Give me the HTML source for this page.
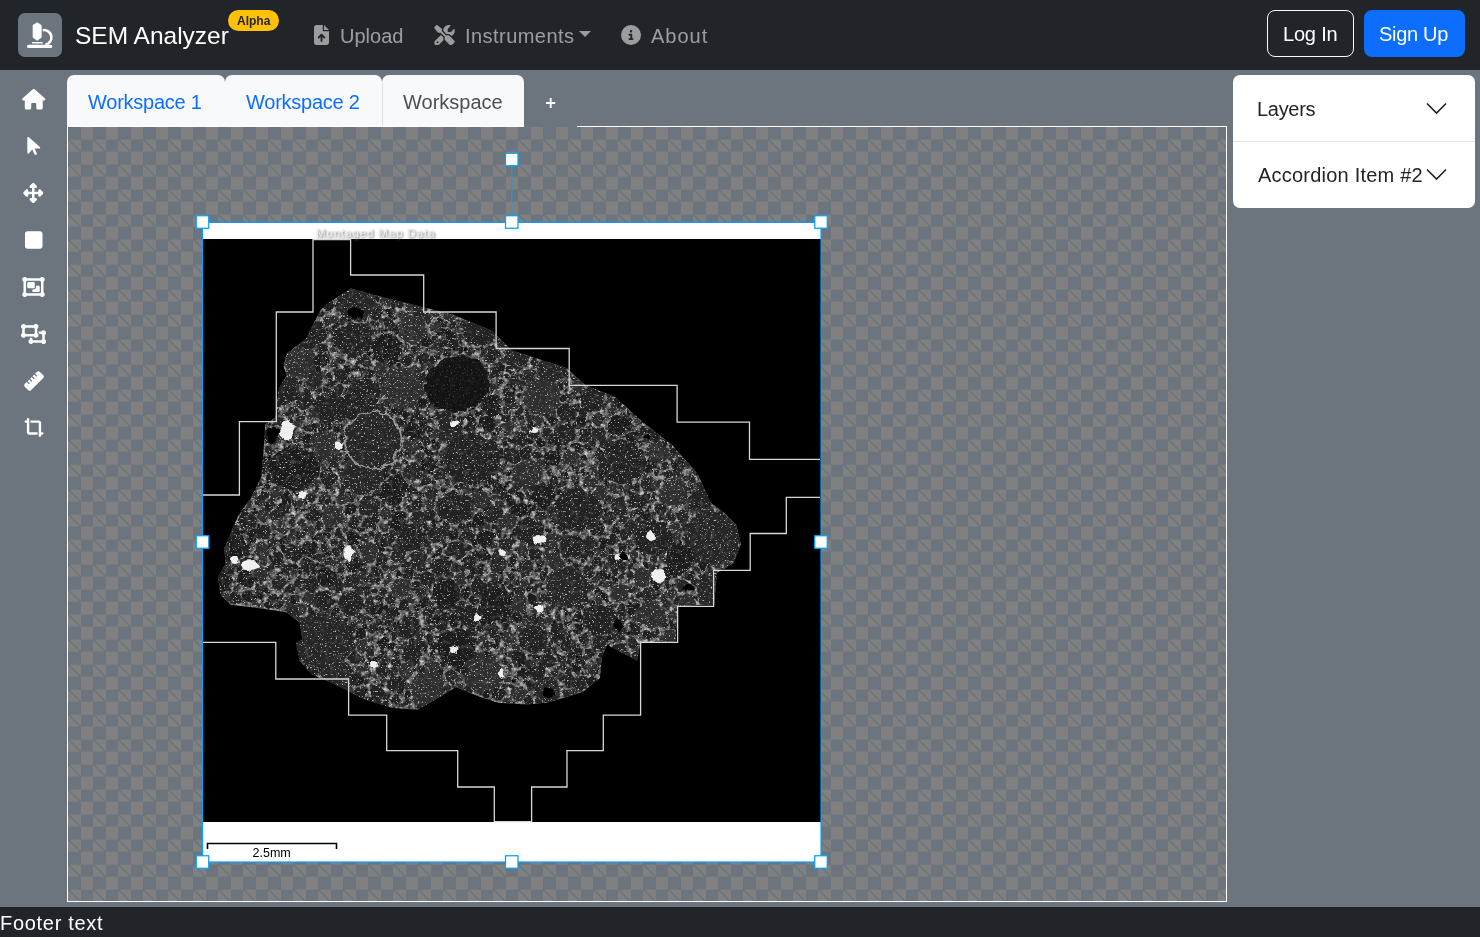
<!DOCTYPE html>
<html><head><meta charset="utf-8">
<style>
html,body{margin:0;padding:0;width:1480px;height:937px;overflow:hidden;background:#6c757d;font-family:"Liberation Sans",sans-serif;}
.abs{position:absolute;}
#nav{position:absolute;left:0;top:0;width:1480px;height:70px;background:#212529;}
#footer{position:absolute;left:0;top:907px;width:1480px;height:30px;background:#212529;color:#fff;font-size:20px;}
.t{position:absolute;white-space:nowrap;line-height:1;will-change:transform;}
.navlink{color:rgba(255,255,255,.55);font-size:20px;}
.tab{position:absolute;top:75px;height:51px;background:#f8f9fa;border-radius:7px 7px 0 0;}
.side svg{position:absolute;fill:#fff;}
</style></head><body>
<div id="nav">
  <div class="abs" style="left:18px;top:13px;width:44px;height:44px;background:#6c757d;border-radius:7px;"></div>
  
  <svg class="abs" style="left:0;top:0" width="70" height="70" viewBox="0 0 70 70" fill="#fff">
    <path d="M37.15 22.8 L41.2 25.2 V37.5 L37.15 40.3 L33.1 37.5 V25.2 Z" stroke="#fff" stroke-width="0.8" stroke-linejoin="round"/>
    <rect x="31.9" y="41.9" width="10.9" height="1.5" rx="0.6"/>
    <path d="M42.8 30.2 A7.1 7.1 0 0 1 45.5 44.5" fill="none" stroke="#fff" stroke-width="2.6"/>
    <rect x="27" y="44.7" width="25.2" height="3.3" rx="1.6"/>
  </svg>
  <svg class="abs" style="left:314px;top:25px" width="15" height="20" viewBox="0 0 384 512" fill="rgba(255,255,255,.55)"><path d="M64 0C28.7 0 0 28.7 0 64V448c0 35.3 28.7 64 64 64H320c35.3 0 64-28.7 64-64V160H256c-17.7 0-32-14.3-32-32V0H64zM256 0V128H384L256 0zM216 408c0 13.3-10.7 24-24 24s-24-10.7-24-24V305.9l-31 31c-9.4 9.4-24.6 9.4-33.9 0s-9.4-24.6 0-33.9l72-72c9.4-9.4 24.6-9.4 33.9 0l72 72c9.4 9.4 9.4 24.6 0 33.9s-24.6 9.4-33.9 0l-31-31V408z"/></svg>
  <svg class="abs" style="left:433.5px;top:24.5px" width="21" height="20.5" viewBox="0 0 512 512" fill="rgba(255,255,255,.55)"><path d="M78.6 5C69.1-2.4 55.6-1.5 47 7L7 47c-8.5 8.5-9.4 22-2.1 31.6l80 104c4.5 5.9 11.6 9.4 19 9.4h54.1l109 109c-14.7 29-10 65.4 14.3 89.6l112 112c12.5 12.5 32.8 12.5 45.3 0l64-64c12.5-12.5 12.5-32.8 0-45.3l-112-112c-24.2-24.2-60.6-29-89.6-14.3l-109-109V104c0-7.5-3.5-14.5-9.4-19L78.6 5zM19.9 396.1C7.2 408.8 0 426.1 0 444.1C0 481.6 30.4 512 67.9 512c18 0 35.3-7.2 48-19.9L233.7 374.3c-7.8-20.9-9-43.6-3.6-65.1l-61.7-61.7L19.9 396.1zM512 144c0-10.5-1.1-20.7-3.2-30.5c-2.4-11.2-16.1-14.1-24.2-6l-63.9 63.9c-3 3-7.1 4.7-11.3 4.7H352c-8.8 0-16-7.2-16-16V102.6c0-4.2 1.7-8.3 4.7-11.3l63.9-63.9c8.1-8.1 5.2-21.8-6-24.2C388.7 1.1 378.5 0 368 0C288.5 0 224 64.5 224 144l0 .8 85.3 85.3c36-9.1 75.8 .5 104 28.7L429 274.5c49-23 83-72.8 83-130.5zM56 432a24 24 0 1 1 48 0 24 24 0 1 1 -48 0z"/></svg>
  <svg class="abs" style="left:579px;top:31px" width="12" height="6" viewBox="0 0 12 6" fill="rgba(255,255,255,.55)"><path d="M0 0H12L6 6Z"/></svg>
  <svg class="abs" style="left:621px;top:25px" width="20" height="20" viewBox="0 0 512 512" fill="rgba(255,255,255,.55)"><path d="M256 512A256 256 0 1 0 256 0a256 256 0 1 0 0 512zM216 336h24V272H216c-13.3 0-24-10.7-24-24s10.7-24 24-24h48c13.3 0 24 10.7 24 24v88h8c13.3 0 24 10.7 24 24s-10.7 24-24 24H216c-13.3 0-24-10.7-24-24s10.7-24 24-24zm40-208a32 32 0 1 1 0 64 32 32 0 1 1 0-64z"/></svg>
  <div class="t" style="left:75px;top:24.4px;font-size:24.5px;color:#fff;">SEM Analyzer</div>
  <div class="abs" style="left:228px;top:10px;width:51px;height:21px;background:#ffc107;border-radius:11px;"></div>
  <div class="t" style="left:237px;top:14.8px;font-size:12px;font-weight:bold;color:#212529;">Alpha</div>
  <div class="t navlink" style="left:340px;top:26px;">Upload</div>
  <div class="t navlink" style="left:464.5px;top:26px;letter-spacing:0.45px;">Instruments</div>
  <div class="t navlink" style="left:651px;top:26.2px;letter-spacing:1px;">About</div>
  <div class="abs" style="left:1267px;top:10px;width:85px;height:45px;border:1px solid #f8f9fa;border-radius:8px;"></div>
  <div class="t" style="left:1283.3px;top:24.3px;font-size:20px;color:#fff;letter-spacing:-0.2px;">Log In</div>
  <div class="abs" style="left:1364px;top:10px;width:101px;height:47px;background:#0d6efd;border-radius:8px;"></div>
  <div class="t" style="left:1379.3px;top:24.3px;font-size:20px;color:#fff;letter-spacing:-0.3px;">Sign Up</div>
</div>

<svg class="abs" style="left:0;top:0" width="1480" height="937" viewBox="0 0 1480 937">
<defs>
<pattern id="chk" patternUnits="userSpaceOnUse" x="68" y="126.6" width="25" height="25">
<rect width="25" height="25" fill="#6c757d"/>
<rect x="12.5" y="0" width="12.5" height="12.5" fill="#808080" shape-rendering="crispEdges"/>
<rect x="0" y="12.5" width="12.5" height="12.5" fill="#808080" shape-rendering="crispEdges"/>
<line x1="0" y1="12.5" x2="12.5" y2="25" stroke="#66707a" stroke-width="1.1"/>
</pattern>
<clipPath id="rockclip"><polygon points="350.9,288.6 382.9,297.2 421.3,306.8 453.3,314.8 491.8,330.8 512.0,350.4 566.5,368.0 585.7,385.6 614.5,396.8 643.3,422.5 672.1,444.9 697.7,473.7 710.5,502.5 723.4,512.1 736.2,525.0 741.0,544.0 733.0,563.4 717.0,573.0 714.2,604.3 677.3,606.0 675.6,641.2 640.4,643.0 637.0,660.5 607.0,644.7 601.8,657.0 600.0,678.1 582.4,692.2 547.3,702.7 526.2,704.5 498.1,702.7 477.0,695.7 456.0,686.9 441.9,695.7 417.3,709.7 392.7,708.0 364.6,699.2 350.5,692.2 336.5,685.1 311.9,674.6 299.6,660.5 296.0,643.0 302.4,640.0 299.8,622.7 287.0,612.5 264.0,608.7 230.7,604.8 220.5,594.6 218.0,576.7 225.6,563.8 224.3,548.5 230.7,533.0 238.4,515.2 251.2,497.3 261.4,476.8 264.0,443.5 265.3,424.3 275.6,417.3 278.8,388.5 286.8,375.7 283.6,366.0 286.8,353.3 306.0,338.8 312.5,326.0 320.5,310.0 325.3,305.2"/></clipPath>
<filter id="rough" filterUnits="userSpaceOnUse" x="200" y="280" width="560" height="440">
<feTurbulence type="fractalNoise" baseFrequency="0.12" numOctaves="2" seed="2" result="n"/>
<feDisplacementMap in="SourceGraphic" in2="n" scale="8" xChannelSelector="R" yChannelSelector="G"/>
</filter>
<filter id="speck" filterUnits="userSpaceOnUse" x="200" y="280" width="560" height="440" color-interpolation-filters="sRGB">
<feTurbulence type="fractalNoise" baseFrequency="0.55" numOctaves="2" seed="5" result="sp"/>
<feColorMatrix in="sp" type="matrix" values="0 0 0 0 0.75  0 0 0 0 0.75  0 0 0 0 0.75  6 0 0 0 -3.75"/>
</filter>
<filter id="mottle" filterUnits="userSpaceOnUse" x="200" y="280" width="560" height="440" color-interpolation-filters="sRGB">
<feTurbulence type="fractalNoise" baseFrequency="0.2" numOctaves="2" seed="13" result="mo"/>
<feColorMatrix in="mo" type="matrix" values="0 0 0 0 0.28  0 0 0 0 0.28  0 0 0 0 0.28  3 0 0 0 -1.6"/>
</filter>
<filter id="matrix" filterUnits="userSpaceOnUse" x="200" y="280" width="560" height="440" color-interpolation-filters="sRGB">
<feTurbulence type="fractalNoise" baseFrequency="0.25" numOctaves="2" seed="8" result="m"/>
<feColorMatrix in="m" type="matrix" values="1.3 0 0 0 -0.25  1.3 0 0 0 -0.25  1.3 0 0 0 -0.25  0 0 0 0 1"/>
</filter>
</defs>
<rect x="67" y="126" width="1160" height="776" fill="#fff"/>
<rect x="68" y="127" width="1158" height="774" fill="url(#chk)"/>
<rect x="524" y="125.5" width="53" height="1.5" fill="#6c757d"/>
<rect x="203" y="223" width="618" height="639" fill="#fff"/>
<rect x="203" y="239" width="618" height="583" fill="#000"/>
<g clip-path="url(#rockclip)">
<rect x="200" y="280" width="560" height="440" filter="url(#matrix)"/>
<g filter="url(#rough)"><ellipse cx="457.0" cy="384.0" rx="33.0" ry="28.0" transform="rotate(-20 457.0 384.0)" fill="#1c1c1c"/><ellipse cx="373.0" cy="440.0" rx="29.0" ry="29.0" transform="rotate(0 373.0 440.0)" fill="#282828"/><ellipse cx="711.0" cy="538.0" rx="27.0" ry="28.0" transform="rotate(0 711.0 538.0)" fill="#282828"/><ellipse cx="572.0" cy="546.0" rx="12.0" ry="12.0" transform="rotate(0 572.0 546.0)" fill="#242424"/><ellipse cx="567.0" cy="587.0" rx="22.0" ry="20.0" transform="rotate(0 567.0 587.0)" fill="#282828"/><ellipse cx="601.0" cy="620.0" rx="18.0" ry="16.0" transform="rotate(0 601.0 620.0)" fill="#202020"/><ellipse cx="472.0" cy="459.0" rx="28.0" ry="26.0" transform="rotate(0 472.0 459.0)" fill="#202020"/><ellipse cx="410.0" cy="538.0" rx="14.0" ry="14.0" transform="rotate(0 410.0 538.0)" fill="#242424"/><ellipse cx="362.0" cy="476.0" rx="20.0" ry="18.0" transform="rotate(0 362.0 476.0)" fill="#282828"/><ellipse cx="294.0" cy="469.0" rx="26.0" ry="22.0" transform="rotate(0 294.0 469.0)" fill="#1c1c1c"/><ellipse cx="322.0" cy="640.0" rx="30.0" ry="28.0" transform="rotate(0 322.0 640.0)" fill="#282828"/><ellipse cx="578.0" cy="510.0" rx="24.0" ry="22.0" transform="rotate(0 578.0 510.0)" fill="#242424"/><ellipse cx="622.0" cy="462.0" rx="24.0" ry="22.0" transform="rotate(0 622.0 462.0)" fill="#202020"/><ellipse cx="653.0" cy="538.0" rx="20.0" ry="18.0" transform="rotate(0 653.0 538.0)" fill="#242424"/><ellipse cx="301.0" cy="363.0" rx="16.0" ry="16.0" transform="rotate(0 301.0 363.0)" fill="#2e2e2e"/><ellipse cx="354.0" cy="340.0" rx="20.0" ry="17.0" transform="rotate(0 354.0 340.0)" fill="#242424"/><ellipse cx="402.0" cy="388.0" rx="22.0" ry="20.0" transform="rotate(0 402.0 388.0)" fill="#2e2e2e"/><ellipse cx="386.6" cy="349.4" rx="14.6" ry="16.2" transform="rotate(17 386.6 349.4)" fill="#1c1c1c"/><ellipse cx="523.9" cy="673.4" rx="5.4" ry="5.6" transform="rotate(13 523.9 673.4)" fill="#1c1c1c"/><ellipse cx="547.5" cy="689.7" rx="14.2" ry="12.0" transform="rotate(40 547.5 689.7)" fill="#282828"/><ellipse cx="511.9" cy="576.2" rx="4.1" ry="3.9" transform="rotate(67 511.9 576.2)" fill="#202020"/><ellipse cx="543.1" cy="497.0" rx="11.8" ry="11.0" transform="rotate(105 543.1 497.0)" fill="#1c1c1c"/><ellipse cx="519.4" cy="509.3" rx="8.4" ry="7.3" transform="rotate(176 519.4 509.3)" fill="#1c1c1c"/><ellipse cx="396.3" cy="683.5" rx="8.2" ry="8.9" transform="rotate(138 396.3 683.5)" fill="#242424"/><ellipse cx="518.7" cy="658.8" rx="7.7" ry="7.4" transform="rotate(89 518.7 658.8)" fill="#1c1c1c"/><ellipse cx="249.4" cy="597.2" rx="7.2" ry="7.3" transform="rotate(148 249.4 597.2)" fill="#1c1c1c"/><ellipse cx="330.7" cy="407.7" rx="17.1" ry="16.7" transform="rotate(157 330.7 407.7)" fill="#202020"/><ellipse cx="295.2" cy="566.2" rx="3.0" ry="2.9" transform="rotate(47 295.2 566.2)" fill="#1c1c1c"/><ellipse cx="538.2" cy="421.0" rx="5.2" ry="4.8" transform="rotate(111 538.2 421.0)" fill="#2e2e2e"/><ellipse cx="511.4" cy="455.0" rx="8.3" ry="8.8" transform="rotate(11 511.4 455.0)" fill="#202020"/><ellipse cx="273.3" cy="541.5" rx="3.6" ry="3.5" transform="rotate(18 273.3 541.5)" fill="#282828"/><ellipse cx="325.2" cy="445.6" rx="15.2" ry="14.7" transform="rotate(66 325.2 445.6)" fill="#2e2e2e"/><ellipse cx="469.6" cy="418.2" rx="4.6" ry="4.6" transform="rotate(48 469.6 418.2)" fill="#1c1c1c"/><ellipse cx="292.7" cy="516.9" rx="3.2" ry="2.7" transform="rotate(116 292.7 516.9)" fill="#2e2e2e"/><ellipse cx="333.1" cy="516.2" rx="11.6" ry="10.7" transform="rotate(146 333.1 516.2)" fill="#2e2e2e"/><ellipse cx="363.1" cy="395.7" rx="18.4" ry="16.5" transform="rotate(146 363.1 395.7)" fill="#202020"/><ellipse cx="598.3" cy="434.2" rx="7.3" ry="7.0" transform="rotate(85 598.3 434.2)" fill="#282828"/><ellipse cx="394.0" cy="491.1" rx="15.0" ry="13.2" transform="rotate(118 394.0 491.1)" fill="#1c1c1c"/><ellipse cx="612.6" cy="489.1" rx="4.9" ry="4.9" transform="rotate(16 612.6 489.1)" fill="#2e2e2e"/><ellipse cx="427.7" cy="689.3" rx="16.8" ry="18.9" transform="rotate(5 427.7 689.3)" fill="#2e2e2e"/><ellipse cx="563.4" cy="434.6" rx="12.1" ry="10.3" transform="rotate(144 563.4 434.6)" fill="#202020"/><ellipse cx="619.8" cy="424.2" rx="11.8" ry="10.5" transform="rotate(164 619.8 424.2)" fill="#1c1c1c"/><ellipse cx="701.4" cy="499.2" rx="11.2" ry="11.4" transform="rotate(157 701.4 499.2)" fill="#242424"/><ellipse cx="470.7" cy="616.6" rx="10.9" ry="10.7" transform="rotate(8 470.7 616.6)" fill="#202020"/><ellipse cx="266.8" cy="478.1" rx="3.2" ry="3.1" transform="rotate(80 266.8 478.1)" fill="#1c1c1c"/><ellipse cx="497.6" cy="489.1" rx="6.2" ry="6.2" transform="rotate(170 497.6 489.1)" fill="#1c1c1c"/><ellipse cx="352.6" cy="523.9" rx="6.4" ry="5.3" transform="rotate(22 352.6 523.9)" fill="#202020"/><ellipse cx="449.3" cy="316.0" rx="5.9" ry="5.4" transform="rotate(55 449.3 316.0)" fill="#2e2e2e"/><ellipse cx="429.0" cy="464.9" rx="7.7" ry="8.0" transform="rotate(4 429.0 464.9)" fill="#1c1c1c"/><ellipse cx="508.6" cy="473.1" rx="2.9" ry="2.9" transform="rotate(53 508.6 473.1)" fill="#1c1c1c"/><ellipse cx="355.7" cy="301.9" rx="18.7" ry="20.0" transform="rotate(148 355.7 301.9)" fill="#282828"/><ellipse cx="665.3" cy="573.6" rx="6.9" ry="6.7" transform="rotate(93 665.3 573.6)" fill="#1c1c1c"/><ellipse cx="245.5" cy="578.9" rx="9.7" ry="8.1" transform="rotate(3 245.5 578.9)" fill="#1c1c1c"/><ellipse cx="283.5" cy="510.0" rx="6.5" ry="6.3" transform="rotate(47 283.5 510.0)" fill="#242424"/><ellipse cx="376.7" cy="609.3" rx="6.9" ry="6.9" transform="rotate(49 376.7 609.3)" fill="#1c1c1c"/><ellipse cx="657.3" cy="452.8" rx="11.5" ry="10.7" transform="rotate(41 657.3 452.8)" fill="#2e2e2e"/><ellipse cx="552.1" cy="457.8" rx="8.8" ry="8.1" transform="rotate(3 552.1 457.8)" fill="#1c1c1c"/><ellipse cx="546.5" cy="660.7" rx="8.4" ry="7.8" transform="rotate(151 546.5 660.7)" fill="#242424"/><ellipse cx="532.4" cy="580.8" rx="3.0" ry="2.6" transform="rotate(80 532.4 580.8)" fill="#202020"/><ellipse cx="386.5" cy="299.7" rx="6.6" ry="6.2" transform="rotate(60 386.5 299.7)" fill="#2e2e2e"/><ellipse cx="321.5" cy="500.5" rx="2.8" ry="3.0" transform="rotate(26 321.5 500.5)" fill="#202020"/><ellipse cx="526.0" cy="453.2" rx="6.7" ry="6.3" transform="rotate(105 526.0 453.2)" fill="#202020"/><ellipse cx="495.5" cy="605.5" rx="17.3" ry="16.1" transform="rotate(107 495.5 605.5)" fill="#1c1c1c"/><ellipse cx="620.1" cy="592.7" rx="9.3" ry="9.9" transform="rotate(116 620.1 592.7)" fill="#2e2e2e"/><ellipse cx="482.9" cy="673.5" rx="20.0" ry="20.3" transform="rotate(145 482.9 673.5)" fill="#2e2e2e"/><ellipse cx="323.8" cy="600.9" rx="10.0" ry="9.3" transform="rotate(86 323.8 600.9)" fill="#202020"/><ellipse cx="550.4" cy="369.7" rx="13.0" ry="12.6" transform="rotate(134 550.4 369.7)" fill="#282828"/><ellipse cx="376.3" cy="527.4" rx="3.0" ry="2.8" transform="rotate(175 376.3 527.4)" fill="#242424"/><ellipse cx="369.2" cy="505.6" rx="9.9" ry="10.0" transform="rotate(179 369.2 505.6)" fill="#282828"/><ellipse cx="506.0" cy="418.1" rx="4.3" ry="3.4" transform="rotate(83 506.0 418.1)" fill="#202020"/><ellipse cx="534.8" cy="554.7" rx="7.5" ry="6.9" transform="rotate(42 534.8 554.7)" fill="#242424"/><ellipse cx="435.6" cy="445.6" rx="4.3" ry="3.4" transform="rotate(135 435.6 445.6)" fill="#202020"/><ellipse cx="592.9" cy="670.0" rx="6.7" ry="6.0" transform="rotate(70 592.9 670.0)" fill="#2e2e2e"/><ellipse cx="613.9" cy="560.2" rx="7.0" ry="7.2" transform="rotate(99 613.9 560.2)" fill="#242424"/><ellipse cx="352.9" cy="565.1" rx="7.0" ry="6.9" transform="rotate(22 352.9 565.1)" fill="#1c1c1c"/><ellipse cx="453.5" cy="344.6" rx="5.7" ry="5.3" transform="rotate(100 453.5 344.6)" fill="#242424"/><ellipse cx="418.8" cy="560.8" rx="9.8" ry="9.2" transform="rotate(157 418.8 560.8)" fill="#282828"/><ellipse cx="714.0" cy="593.2" rx="17.1" ry="16.5" transform="rotate(15 714.0 593.2)" fill="#282828"/><ellipse cx="338.3" cy="677.8" rx="16.7" ry="16.7" transform="rotate(113 338.3 677.8)" fill="#282828"/><ellipse cx="333.5" cy="541.7" rx="3.0" ry="3.1" transform="rotate(50 333.5 541.7)" fill="#242424"/><ellipse cx="382.7" cy="643.4" rx="6.0" ry="5.4" transform="rotate(44 382.7 643.4)" fill="#1c1c1c"/><ellipse cx="568.7" cy="680.0" rx="6.0" ry="5.9" transform="rotate(129 568.7 680.0)" fill="#202020"/><ellipse cx="407.0" cy="454.2" rx="3.2" ry="3.0" transform="rotate(91 407.0 454.2)" fill="#242424"/><ellipse cx="314.3" cy="380.4" rx="9.7" ry="7.8" transform="rotate(107 314.3 380.4)" fill="#282828"/><ellipse cx="599.4" cy="643.3" rx="7.9" ry="7.0" transform="rotate(14 599.4 643.3)" fill="#242424"/><ellipse cx="351.2" cy="604.1" rx="13.5" ry="12.7" transform="rotate(172 351.2 604.1)" fill="#202020"/><ellipse cx="542.0" cy="396.9" rx="18.7" ry="18.6" transform="rotate(54 542.0 396.9)" fill="#2e2e2e"/><ellipse cx="651.1" cy="615.0" rx="13.3" ry="14.3" transform="rotate(83 651.1 615.0)" fill="#2e2e2e"/><ellipse cx="479.2" cy="588.1" rx="9.3" ry="8.8" transform="rotate(83 479.2 588.1)" fill="#202020"/><ellipse cx="412.3" cy="654.8" rx="10.2" ry="10.0" transform="rotate(120 412.3 654.8)" fill="#202020"/><ellipse cx="235.3" cy="597.7" rx="6.4" ry="6.1" transform="rotate(74 235.3 597.7)" fill="#242424"/><ellipse cx="498.0" cy="563.9" rx="9.4" ry="8.4" transform="rotate(51 498.0 563.9)" fill="#282828"/><ellipse cx="378.0" cy="692.0" rx="7.3" ry="7.2" transform="rotate(75 378.0 692.0)" fill="#242424"/><ellipse cx="263.0" cy="531.7" rx="7.9" ry="7.1" transform="rotate(3 263.0 531.7)" fill="#242424"/><ellipse cx="262.2" cy="550.7" rx="8.4" ry="7.1" transform="rotate(63 262.2 550.7)" fill="#2e2e2e"/><ellipse cx="634.8" cy="628.6" rx="6.5" ry="7.3" transform="rotate(176 634.8 628.6)" fill="#242424"/><ellipse cx="280.2" cy="390.5" rx="19.1" ry="16.0" transform="rotate(159 280.2 390.5)" fill="#202020"/><ellipse cx="456.5" cy="647.5" rx="19.2" ry="18.7" transform="rotate(105 456.5 647.5)" fill="#1c1c1c"/><ellipse cx="440.6" cy="566.3" rx="10.0" ry="8.9" transform="rotate(1 440.6 566.3)" fill="#242424"/><ellipse cx="408.6" cy="627.6" rx="12.0" ry="10.3" transform="rotate(115 408.6 627.6)" fill="#202020"/><ellipse cx="360.7" cy="633.3" rx="4.8" ry="5.2" transform="rotate(86 360.7 633.3)" fill="#1c1c1c"/><ellipse cx="575.2" cy="667.3" rx="5.3" ry="4.5" transform="rotate(138 575.2 667.3)" fill="#1c1c1c"/><ellipse cx="455.1" cy="507.7" rx="19.4" ry="15.7" transform="rotate(179 455.1 507.7)" fill="#202020"/><ellipse cx="411.9" cy="445.4" rx="8.1" ry="7.4" transform="rotate(138 411.9 445.4)" fill="#2e2e2e"/><ellipse cx="525.5" cy="568.4" rx="8.4" ry="8.0" transform="rotate(40 525.5 568.4)" fill="#282828"/><ellipse cx="369.2" cy="552.1" rx="9.0" ry="9.3" transform="rotate(24 369.2 552.1)" fill="#2e2e2e"/><ellipse cx="335.4" cy="563.9" rx="2.7" ry="2.9" transform="rotate(55 335.4 563.9)" fill="#202020"/><ellipse cx="492.2" cy="513.1" rx="9.2" ry="8.7" transform="rotate(37 492.2 513.1)" fill="#202020"/><ellipse cx="428.0" cy="397.8" rx="2.7" ry="3.0" transform="rotate(161 428.0 397.8)" fill="#2e2e2e"/><ellipse cx="530.2" cy="532.0" rx="15.2" ry="14.0" transform="rotate(45 530.2 532.0)" fill="#242424"/><ellipse cx="555.6" cy="561.5" rx="9.6" ry="8.0" transform="rotate(56 555.6 561.5)" fill="#2e2e2e"/><ellipse cx="413.8" cy="471.4" rx="9.2" ry="9.8" transform="rotate(32 413.8 471.4)" fill="#282828"/><ellipse cx="592.2" cy="398.6" rx="12.4" ry="11.8" transform="rotate(165 592.2 398.6)" fill="#202020"/><ellipse cx="260.3" cy="501.7" rx="4.8" ry="4.5" transform="rotate(134 260.3 501.7)" fill="#242424"/><ellipse cx="446.7" cy="594.4" rx="15.1" ry="14.1" transform="rotate(70 446.7 594.4)" fill="#1c1c1c"/><ellipse cx="267.1" cy="485.2" rx="3.0" ry="2.7" transform="rotate(155 267.1 485.2)" fill="#202020"/><ellipse cx="479.1" cy="331.9" rx="16.9" ry="15.2" transform="rotate(178 479.1 331.9)" fill="#242424"/><ellipse cx="687.7" cy="603.2" rx="9.7" ry="7.7" transform="rotate(37 687.7 603.2)" fill="#2e2e2e"/><ellipse cx="460.5" cy="579.2" rx="7.1" ry="6.1" transform="rotate(83 460.5 579.2)" fill="#2e2e2e"/><ellipse cx="491.8" cy="353.7" rx="8.7" ry="7.2" transform="rotate(172 491.8 353.7)" fill="#242424"/><ellipse cx="268.9" cy="449.1" rx="5.3" ry="5.0" transform="rotate(78 268.9 449.1)" fill="#282828"/><ellipse cx="319.0" cy="557.4" rx="3.8" ry="4.1" transform="rotate(84 319.0 557.4)" fill="#282828"/><ellipse cx="519.2" cy="604.9" rx="9.6" ry="8.9" transform="rotate(117 519.2 604.9)" fill="#2e2e2e"/><ellipse cx="680.1" cy="559.0" rx="15.0" ry="13.8" transform="rotate(115 680.1 559.0)" fill="#1c1c1c"/><ellipse cx="456.3" cy="550.4" rx="9.0" ry="8.8" transform="rotate(157 456.3 550.4)" fill="#202020"/><ellipse cx="421.0" cy="494.2" rx="3.6" ry="3.8" transform="rotate(29 421.0 494.2)" fill="#202020"/><ellipse cx="326.3" cy="577.2" rx="9.0" ry="9.3" transform="rotate(131 326.3 577.2)" fill="#1c1c1c"/><ellipse cx="585.1" cy="435.4" rx="6.5" ry="6.4" transform="rotate(72 585.1 435.4)" fill="#202020"/><ellipse cx="512.9" cy="381.5" rx="4.9" ry="4.9" transform="rotate(147 512.9 381.5)" fill="#242424"/><ellipse cx="647.6" cy="484.9" rx="7.4" ry="6.9" transform="rotate(140 647.6 484.9)" fill="#282828"/><ellipse cx="454.5" cy="620.1" rx="6.5" ry="6.1" transform="rotate(30 454.5 620.1)" fill="#1c1c1c"/><ellipse cx="632.7" cy="643.2" rx="6.0" ry="5.4" transform="rotate(14 632.7 643.2)" fill="#202020"/><ellipse cx="509.2" cy="397.9" rx="6.4" ry="5.7" transform="rotate(100 509.2 397.9)" fill="#242424"/><ellipse cx="532.8" cy="598.7" rx="5.3" ry="4.7" transform="rotate(101 532.8 598.7)" fill="#1c1c1c"/><ellipse cx="567.6" cy="643.9" rx="7.9" ry="8.4" transform="rotate(122 567.6 643.9)" fill="#242424"/><ellipse cx="230.1" cy="545.3" rx="16.8" ry="16.8" transform="rotate(146 230.1 545.3)" fill="#1c1c1c"/><ellipse cx="435.3" cy="339.2" rx="4.3" ry="3.7" transform="rotate(85 435.3 339.2)" fill="#202020"/><ellipse cx="508.6" cy="638.0" rx="6.8" ry="6.6" transform="rotate(60 508.6 638.0)" fill="#2e2e2e"/><ellipse cx="580.2" cy="659.2" rx="3.8" ry="3.9" transform="rotate(82 580.2 659.2)" fill="#202020"/><ellipse cx="675.7" cy="465.0" rx="4.3" ry="3.9" transform="rotate(66 675.7 465.0)" fill="#1c1c1c"/><ellipse cx="591.4" cy="653.3" rx="4.9" ry="4.6" transform="rotate(78 591.4 653.3)" fill="#202020"/><ellipse cx="583.7" cy="457.8" rx="3.6" ry="3.7" transform="rotate(107 583.7 457.8)" fill="#1c1c1c"/><ellipse cx="623.0" cy="519.3" rx="4.1" ry="3.6" transform="rotate(27 623.0 519.3)" fill="#282828"/><ellipse cx="590.9" cy="481.7" rx="7.6" ry="6.0" transform="rotate(6 590.9 481.7)" fill="#2e2e2e"/><ellipse cx="630.9" cy="527.0" rx="6.7" ry="6.8" transform="rotate(117 630.9 527.0)" fill="#282828"/><ellipse cx="579.9" cy="422.3" rx="6.9" ry="6.8" transform="rotate(147 579.9 422.3)" fill="#1c1c1c"/><ellipse cx="642.7" cy="577.3" rx="9.7" ry="8.7" transform="rotate(100 642.7 577.3)" fill="#2e2e2e"/><ellipse cx="310.8" cy="584.4" rx="8.1" ry="7.4" transform="rotate(140 310.8 584.4)" fill="#242424"/><ellipse cx="413.2" cy="330.3" rx="15.9" ry="13.9" transform="rotate(57 413.2 330.3)" fill="#2e2e2e"/><ellipse cx="674.0" cy="492.7" rx="13.2" ry="14.5" transform="rotate(50 674.0 492.7)" fill="#2e2e2e"/><ellipse cx="527.6" cy="473.4" rx="14.7" ry="14.6" transform="rotate(46 527.6 473.4)" fill="#2e2e2e"/><ellipse cx="390.9" cy="599.3" rx="5.2" ry="4.8" transform="rotate(26 390.9 599.3)" fill="#282828"/><ellipse cx="642.7" cy="430.6" rx="4.9" ry="5.0" transform="rotate(170 642.7 430.6)" fill="#242424"/><ellipse cx="533.3" cy="639.0" rx="14.6" ry="14.0" transform="rotate(32 533.3 639.0)" fill="#242424"/><ellipse cx="220.3" cy="580.6" rx="11.8" ry="11.9" transform="rotate(10 220.3 580.6)" fill="#1c1c1c"/><ellipse cx="285.6" cy="569.2" rx="5.6" ry="6.1" transform="rotate(66 285.6 569.2)" fill="#282828"/><ellipse cx="417.1" cy="605.8" rx="2.9" ry="2.6" transform="rotate(132 417.1 605.8)" fill="#1c1c1c"/><ellipse cx="333.6" cy="362.9" rx="3.8" ry="3.8" transform="rotate(172 333.6 362.9)" fill="#282828"/><ellipse cx="552.5" cy="483.1" rx="6.2" ry="5.2" transform="rotate(157 552.5 483.1)" fill="#242424"/><ellipse cx="683.8" cy="516.3" rx="6.4" ry="5.3" transform="rotate(103 683.8 516.3)" fill="#282828"/><ellipse cx="274.9" cy="433.4" rx="4.6" ry="4.8" transform="rotate(172 274.9 433.4)" fill="#242424"/><ellipse cx="507.1" cy="543.7" rx="7.9" ry="6.9" transform="rotate(70 507.1 543.7)" fill="#282828"/><ellipse cx="312.6" cy="414.8" rx="4.9" ry="4.6" transform="rotate(42 312.6 414.8)" fill="#2e2e2e"/><ellipse cx="323.3" cy="467.1" rx="2.7" ry="2.7" transform="rotate(161 323.3 467.1)" fill="#2e2e2e"/><ellipse cx="573.4" cy="478.5" rx="3.1" ry="2.9" transform="rotate(18 573.4 478.5)" fill="#2e2e2e"/><ellipse cx="308.1" cy="565.1" rx="7.3" ry="7.1" transform="rotate(178 308.1 565.1)" fill="#202020"/><ellipse cx="685.7" cy="464.7" rx="5.0" ry="5.1" transform="rotate(37 685.7 464.7)" fill="#202020"/><ellipse cx="549.0" cy="542.5" rx="8.1" ry="7.8" transform="rotate(130 549.0 542.5)" fill="#2e2e2e"/><ellipse cx="377.6" cy="579.9" rx="3.3" ry="2.8" transform="rotate(18 377.6 579.9)" fill="#242424"/><ellipse cx="478.9" cy="521.2" rx="7.5" ry="7.2" transform="rotate(93 478.9 521.2)" fill="#1c1c1c"/><ellipse cx="419.4" cy="308.3" rx="9.1" ry="9.4" transform="rotate(79 419.4 308.3)" fill="#282828"/><ellipse cx="299.5" cy="535.6" rx="4.8" ry="5.1" transform="rotate(147 299.5 535.6)" fill="#242424"/><ellipse cx="421.6" cy="591.8" rx="5.9" ry="5.6" transform="rotate(128 421.6 591.8)" fill="#282828"/><ellipse cx="306.9" cy="438.0" rx="4.5" ry="5.1" transform="rotate(71 306.9 438.0)" fill="#1c1c1c"/><ellipse cx="419.4" cy="457.2" rx="4.4" ry="3.7" transform="rotate(164 419.4 457.2)" fill="#2e2e2e"/><ellipse cx="297.6" cy="586.4" rx="3.8" ry="3.8" transform="rotate(142 297.6 586.4)" fill="#282828"/><ellipse cx="385.1" cy="568.0" rx="3.7" ry="4.1" transform="rotate(145 385.1 568.0)" fill="#242424"/><ellipse cx="311.3" cy="334.2" rx="14.7" ry="13.9" transform="rotate(7 311.3 334.2)" fill="#202020"/><ellipse cx="449.6" cy="430.3" rx="12.6" ry="12.2" transform="rotate(113 449.6 430.3)" fill="#282828"/><ellipse cx="503.3" cy="391.6" rx="2.8" ry="2.8" transform="rotate(17 503.3 391.6)" fill="#242424"/><ellipse cx="589.7" cy="571.2" rx="6.2" ry="5.1" transform="rotate(124 589.7 571.2)" fill="#202020"/><ellipse cx="373.7" cy="662.8" rx="5.1" ry="4.5" transform="rotate(113 373.7 662.8)" fill="#1c1c1c"/><ellipse cx="256.4" cy="604.2" rx="3.2" ry="3.1" transform="rotate(53 256.4 604.2)" fill="#2e2e2e"/><ellipse cx="689.7" cy="576.2" rx="4.2" ry="4.1" transform="rotate(134 689.7 576.2)" fill="#1c1c1c"/><ellipse cx="469.8" cy="561.4" rx="7.5" ry="6.7" transform="rotate(114 469.8 561.4)" fill="#242424"/><ellipse cx="422.7" cy="358.1" rx="6.1" ry="6.0" transform="rotate(25 422.7 358.1)" fill="#202020"/><ellipse cx="530.0" cy="376.0" rx="6.5" ry="6.1" transform="rotate(164 530.0 376.0)" fill="#282828"/><ellipse cx="579.2" cy="447.6" rx="5.1" ry="4.5" transform="rotate(180 579.2 447.6)" fill="#242424"/><ellipse cx="473.2" cy="491.7" rx="3.2" ry="2.6" transform="rotate(33 473.2 491.7)" fill="#2e2e2e"/><ellipse cx="649.2" cy="595.5" rx="8.1" ry="7.4" transform="rotate(64 649.2 595.5)" fill="#282828"/><ellipse cx="636.5" cy="657.7" rx="5.2" ry="4.6" transform="rotate(137 636.5 657.7)" fill="#282828"/><ellipse cx="570.8" cy="457.9" rx="9.1" ry="8.2" transform="rotate(30 570.8 457.9)" fill="#2e2e2e"/><ellipse cx="672.6" cy="625.0" rx="4.1" ry="3.7" transform="rotate(89 672.6 625.0)" fill="#202020"/><ellipse cx="389.5" cy="324.9" rx="4.7" ry="4.8" transform="rotate(151 389.5 324.9)" fill="#282828"/><ellipse cx="294.8" cy="553.5" rx="9.5" ry="7.8" transform="rotate(5 294.8 553.5)" fill="#242424"/><ellipse cx="400.9" cy="588.0" rx="11.0" ry="9.5" transform="rotate(115 400.9 588.0)" fill="#2e2e2e"/><ellipse cx="272.1" cy="598.2" rx="4.2" ry="4.1" transform="rotate(121 272.1 598.2)" fill="#242424"/><ellipse cx="374.0" cy="322.8" rx="3.0" ry="3.1" transform="rotate(29 374.0 322.8)" fill="#202020"/><ellipse cx="578.1" cy="628.7" rx="5.5" ry="4.3" transform="rotate(164 578.1 628.7)" fill="#1c1c1c"/><ellipse cx="294.9" cy="599.3" rx="4.2" ry="3.8" transform="rotate(71 294.9 599.3)" fill="#1c1c1c"/><ellipse cx="550.6" cy="517.9" rx="4.0" ry="4.1" transform="rotate(172 550.6 517.9)" fill="#2e2e2e"/><ellipse cx="510.0" cy="439.8" rx="2.9" ry="2.6" transform="rotate(82 510.0 439.8)" fill="#202020"/><ellipse cx="341.7" cy="498.9" rx="7.3" ry="7.0" transform="rotate(178 341.7 498.9)" fill="#2e2e2e"/><ellipse cx="652.5" cy="568.3" rx="4.3" ry="4.0" transform="rotate(164 652.5 568.3)" fill="#282828"/><ellipse cx="485.4" cy="537.9" rx="8.5" ry="8.8" transform="rotate(134 485.4 537.9)" fill="#1c1c1c"/><ellipse cx="408.9" cy="572.7" rx="5.3" ry="4.7" transform="rotate(115 408.9 572.7)" fill="#242424"/><ellipse cx="656.0" cy="634.2" rx="3.9" ry="4.0" transform="rotate(68 656.0 634.2)" fill="#242424"/><ellipse cx="411.5" cy="430.2" rx="8.6" ry="8.7" transform="rotate(0 411.5 430.2)" fill="#1c1c1c"/><ellipse cx="352.6" cy="537.2" rx="7.3" ry="6.3" transform="rotate(58 352.6 537.2)" fill="#1c1c1c"/><ellipse cx="368.9" cy="618.5" rx="3.1" ry="2.8" transform="rotate(8 368.9 618.5)" fill="#242424"/><ellipse cx="558.5" cy="631.2" rx="7.6" ry="8.2" transform="rotate(23 558.5 631.2)" fill="#202020"/><ellipse cx="436.5" cy="534.3" rx="9.6" ry="9.2" transform="rotate(26 436.5 534.3)" fill="#282828"/><ellipse cx="566.9" cy="412.6" rx="9.0" ry="8.4" transform="rotate(9 566.9 412.6)" fill="#202020"/><ellipse cx="646.6" cy="497.3" rx="3.3" ry="2.9" transform="rotate(144 646.6 497.3)" fill="#202020"/><ellipse cx="567.7" cy="383.6" rx="2.9" ry="2.6" transform="rotate(52 567.7 383.6)" fill="#242424"/><ellipse cx="253.7" cy="494.2" rx="3.2" ry="2.8" transform="rotate(167 253.7 494.2)" fill="#2e2e2e"/><ellipse cx="621.9" cy="611.7" rx="6.1" ry="5.5" transform="rotate(104 621.9 611.7)" fill="#202020"/><ellipse cx="715.5" cy="565.3" rx="2.8" ry="2.8" transform="rotate(87 715.5 565.3)" fill="#2e2e2e"/><ellipse cx="439.7" cy="551.6" rx="3.8" ry="4.1" transform="rotate(15 439.7 551.6)" fill="#202020"/><ellipse cx="459.7" cy="678.2" rx="2.9" ry="3.1" transform="rotate(142 459.7 678.2)" fill="#282828"/><ellipse cx="603.9" cy="574.9" rx="5.3" ry="5.0" transform="rotate(37 603.9 574.9)" fill="#1c1c1c"/><ellipse cx="352.4" cy="581.2" rx="7.6" ry="7.0" transform="rotate(150 352.4 581.2)" fill="#282828"/><ellipse cx="430.9" cy="514.8" rx="5.5" ry="5.9" transform="rotate(7 430.9 514.8)" fill="#242424"/><ellipse cx="407.8" cy="701.8" rx="3.2" ry="3.1" transform="rotate(21 407.8 701.8)" fill="#242424"/><ellipse cx="405.9" cy="670.5" rx="7.5" ry="7.7" transform="rotate(149 405.9 670.5)" fill="#2e2e2e"/><ellipse cx="385.1" cy="472.2" rx="4.1" ry="3.7" transform="rotate(58 385.1 472.2)" fill="#1c1c1c"/><ellipse cx="635.4" cy="486.8" rx="3.8" ry="4.1" transform="rotate(81 635.4 486.8)" fill="#1c1c1c"/><ellipse cx="592.2" cy="682.1" rx="5.1" ry="5.2" transform="rotate(114 592.2 682.1)" fill="#1c1c1c"/><ellipse cx="285.8" cy="429.6" rx="4.3" ry="3.5" transform="rotate(1 285.8 429.6)" fill="#282828"/><ellipse cx="568.4" cy="661.5" rx="3.2" ry="3.1" transform="rotate(59 568.4 661.5)" fill="#202020"/><ellipse cx="302.8" cy="609.3" rx="4.2" ry="3.8" transform="rotate(79 302.8 609.3)" fill="#2e2e2e"/><ellipse cx="597.9" cy="592.2" rx="3.9" ry="3.7" transform="rotate(150 597.9 592.2)" fill="#1c1c1c"/><ellipse cx="581.4" cy="464.8" rx="3.2" ry="2.8" transform="rotate(18 581.4 464.8)" fill="#2e2e2e"/><ellipse cx="301.3" cy="503.7" rx="4.0" ry="4.2" transform="rotate(69 301.3 503.7)" fill="#2e2e2e"/><ellipse cx="442.4" cy="332.1" rx="4.0" ry="3.7" transform="rotate(17 442.4 332.1)" fill="#1c1c1c"/><ellipse cx="658.7" cy="591.0" rx="3.1" ry="2.6" transform="rotate(164 658.7 591.0)" fill="#2e2e2e"/><ellipse cx="399.7" cy="423.5" rx="3.7" ry="3.5" transform="rotate(170 399.7 423.5)" fill="#202020"/><ellipse cx="387.8" cy="628.1" rx="2.9" ry="2.6" transform="rotate(42 387.8 628.1)" fill="#1c1c1c"/><ellipse cx="593.6" cy="469.2" rx="4.4" ry="3.5" transform="rotate(79 593.6 469.2)" fill="#2e2e2e"/><ellipse cx="409.1" cy="508.3" rx="4.3" ry="4.1" transform="rotate(30 409.1 508.3)" fill="#282828"/><ellipse cx="619.2" cy="649.3" rx="6.2" ry="5.7" transform="rotate(157 619.2 649.3)" fill="#242424"/><ellipse cx="493.2" cy="387.4" rx="5.0" ry="4.6" transform="rotate(18 493.2 387.4)" fill="#282828"/><ellipse cx="320.7" cy="313.3" rx="3.1" ry="2.6" transform="rotate(171 320.7 313.3)" fill="#242424"/><ellipse cx="327.5" cy="425.1" rx="3.0" ry="2.8" transform="rotate(137 327.5 425.1)" fill="#202020"/><ellipse cx="567.9" cy="612.4" rx="2.8" ry="2.6" transform="rotate(96 567.9 612.4)" fill="#202020"/><ellipse cx="576.8" cy="566.7" rx="3.2" ry="3.1" transform="rotate(103 576.8 566.7)" fill="#242424"/><ellipse cx="268.2" cy="424.7" rx="3.2" ry="2.6" transform="rotate(67 268.2 424.7)" fill="#202020"/><ellipse cx="633.1" cy="437.3" rx="6.4" ry="5.8" transform="rotate(10 633.1 437.3)" fill="#1c1c1c"/><ellipse cx="480.2" cy="570.4" rx="5.1" ry="4.6" transform="rotate(150 480.2 570.4)" fill="#202020"/><ellipse cx="274.8" cy="528.0" rx="3.3" ry="2.7" transform="rotate(4 274.8 528.0)" fill="#2e2e2e"/><ellipse cx="463.2" cy="324.4" rx="3.2" ry="3.1" transform="rotate(30 463.2 324.4)" fill="#242424"/><ellipse cx="393.1" cy="612.3" rx="6.6" ry="5.4" transform="rotate(156 393.1 612.3)" fill="#242424"/><ellipse cx="290.6" cy="536.8" rx="4.0" ry="3.5" transform="rotate(86 290.6 536.8)" fill="#2e2e2e"/><ellipse cx="319.9" cy="537.8" rx="5.0" ry="4.5" transform="rotate(63 319.9 537.8)" fill="#202020"/><ellipse cx="507.0" cy="678.7" rx="4.2" ry="3.5" transform="rotate(151 507.0 678.7)" fill="#2e2e2e"/><ellipse cx="590.4" cy="554.1" rx="4.0" ry="3.5" transform="rotate(36 590.4 554.1)" fill="#202020"/><ellipse cx="668.1" cy="474.4" rx="3.9" ry="3.8" transform="rotate(56 668.1 474.4)" fill="#202020"/><ellipse cx="278.5" cy="420.9" rx="5.4" ry="5.1" transform="rotate(85 278.5 420.9)" fill="#282828"/><ellipse cx="419.1" cy="518.8" rx="8.4" ry="7.3" transform="rotate(82 419.1 518.8)" fill="#282828"/><ellipse cx="310.8" cy="529.7" rx="5.4" ry="4.5" transform="rotate(38 310.8 529.7)" fill="#2e2e2e"/><ellipse cx="488.2" cy="423.1" rx="8.8" ry="8.9" transform="rotate(12 488.2 423.1)" fill="#1c1c1c"/><ellipse cx="442.6" cy="488.4" rx="2.8" ry="3.0" transform="rotate(150 442.6 488.4)" fill="#1c1c1c"/><ellipse cx="535.1" cy="362.3" rx="3.8" ry="4.0" transform="rotate(136 535.1 362.3)" fill="#282828"/><ellipse cx="427.4" cy="579.0" rx="8.2" ry="7.8" transform="rotate(10 427.4 579.0)" fill="#202020"/><ellipse cx="564.3" cy="396.3" rx="3.7" ry="3.7" transform="rotate(121 564.3 396.3)" fill="#202020"/><ellipse cx="481.5" cy="500.2" rx="8.9" ry="8.7" transform="rotate(8 481.5 500.2)" fill="#2e2e2e"/><ellipse cx="370.3" cy="639.4" rx="3.2" ry="2.8" transform="rotate(132 370.3 639.4)" fill="#2e2e2e"/><ellipse cx="327.8" cy="478.0" rx="8.3" ry="7.5" transform="rotate(16 327.8 478.0)" fill="#202020"/><ellipse cx="336.5" cy="428.9" rx="4.2" ry="4.0" transform="rotate(33 336.5 428.9)" fill="#1c1c1c"/><ellipse cx="421.7" cy="447.0" rx="3.1" ry="2.6" transform="rotate(58 421.7 447.0)" fill="#1c1c1c"/><ellipse cx="513.6" cy="406.3" rx="4.1" ry="4.0" transform="rotate(152 513.6 406.3)" fill="#2e2e2e"/><ellipse cx="557.3" cy="492.6" rx="3.6" ry="4.1" transform="rotate(36 557.3 492.6)" fill="#1c1c1c"/><ellipse cx="530.1" cy="686.2" rx="5.1" ry="4.6" transform="rotate(86 530.1 686.2)" fill="#1c1c1c"/><ellipse cx="387.2" cy="540.0" rx="7.3" ry="6.9" transform="rotate(14 387.2 540.0)" fill="#202020"/><ellipse cx="450.5" cy="676.0" rx="7.6" ry="6.6" transform="rotate(137 450.5 676.0)" fill="#282828"/><ellipse cx="374.8" cy="590.7" rx="3.2" ry="2.8" transform="rotate(144 374.8 590.7)" fill="#202020"/><ellipse cx="332.9" cy="319.8" rx="4.0" ry="3.9" transform="rotate(13 332.9 319.8)" fill="#2e2e2e"/><ellipse cx="433.5" cy="666.1" rx="7.1" ry="6.8" transform="rotate(43 433.5 666.1)" fill="#2e2e2e"/><ellipse cx="374.2" cy="627.1" rx="5.0" ry="4.9" transform="rotate(124 374.2 627.1)" fill="#282828"/><ellipse cx="549.6" cy="620.8" rx="4.4" ry="3.6" transform="rotate(46 549.6 620.8)" fill="#2e2e2e"/><ellipse cx="462.6" cy="526.9" rx="4.2" ry="3.5" transform="rotate(20 462.6 526.9)" fill="#202020"/><ellipse cx="608.9" cy="500.3" rx="3.9" ry="4.1" transform="rotate(140 608.9 500.3)" fill="#282828"/><ellipse cx="322.4" cy="428.3" rx="2.7" ry="3.1" transform="rotate(154 322.4 428.3)" fill="#202020"/><ellipse cx="622.9" cy="547.4" rx="5.5" ry="5.0" transform="rotate(171 622.9 547.4)" fill="#202020"/><ellipse cx="540.8" cy="443.8" rx="4.7" ry="4.9" transform="rotate(121 540.8 443.8)" fill="#1c1c1c"/><ellipse cx="550.6" cy="441.1" rx="3.8" ry="3.6" transform="rotate(21 550.6 441.1)" fill="#242424"/><ellipse cx="513.4" cy="373.4" rx="3.2" ry="2.6" transform="rotate(54 513.4 373.4)" fill="#242424"/><ellipse cx="338.1" cy="585.7" rx="6.6" ry="6.8" transform="rotate(101 338.1 585.7)" fill="#242424"/><ellipse cx="369.8" cy="578.9" rx="5.1" ry="4.7" transform="rotate(132 369.8 578.9)" fill="#282828"/><ellipse cx="311.2" cy="498.0" rx="4.7" ry="4.5" transform="rotate(124 311.2 498.0)" fill="#282828"/><ellipse cx="523.8" cy="427.8" rx="4.3" ry="3.7" transform="rotate(72 523.8 427.8)" fill="#2e2e2e"/><ellipse cx="495.1" cy="646.2" rx="3.1" ry="2.6" transform="rotate(166 495.1 646.2)" fill="#1c1c1c"/><ellipse cx="616.1" cy="529.5" rx="4.8" ry="4.9" transform="rotate(12 616.1 529.5)" fill="#1c1c1c"/><ellipse cx="450.5" cy="334.8" rx="5.3" ry="5.1" transform="rotate(154 450.5 334.8)" fill="#1c1c1c"/><ellipse cx="361.1" cy="619.0" rx="4.8" ry="5.0" transform="rotate(38 361.1 619.0)" fill="#242424"/><ellipse cx="297.0" cy="440.9" rx="3.0" ry="3.1" transform="rotate(45 297.0 440.9)" fill="#2e2e2e"/><ellipse cx="494.1" cy="373.3" rx="5.1" ry="5.2" transform="rotate(139 494.1 373.3)" fill="#242424"/><ellipse cx="350.7" cy="647.0" rx="3.9" ry="4.0" transform="rotate(141 350.7 647.0)" fill="#282828"/><ellipse cx="534.2" cy="618.9" rx="4.8" ry="5.1" transform="rotate(156 534.2 618.9)" fill="#202020"/><ellipse cx="507.3" cy="520.8" rx="8.8" ry="9.1" transform="rotate(95 507.3 520.8)" fill="#2e2e2e"/><ellipse cx="700.3" cy="485.3" rx="4.1" ry="3.7" transform="rotate(47 700.3 485.3)" fill="#202020"/><ellipse cx="389.5" cy="415.4" rx="5.3" ry="4.3" transform="rotate(153 389.5 415.4)" fill="#242424"/><ellipse cx="498.5" cy="693.6" rx="7.0" ry="6.1" transform="rotate(96 498.5 693.6)" fill="#202020"/><ellipse cx="584.0" cy="558.6" rx="4.1" ry="4.1" transform="rotate(170 584.0 558.6)" fill="#242424"/><ellipse cx="502.6" cy="651.0" rx="2.8" ry="3.1" transform="rotate(79 502.6 651.0)" fill="#2e2e2e"/><ellipse cx="264.0" cy="589.5" rx="4.6" ry="4.7" transform="rotate(107 264.0 589.5)" fill="#242424"/><ellipse cx="516.0" cy="355.6" rx="12.7" ry="12.4" transform="rotate(173 516.0 355.6)" fill="#282828"/><ellipse cx="578.4" cy="650.6" rx="4.9" ry="4.6" transform="rotate(58 578.4 650.6)" fill="#242424"/><ellipse cx="498.2" cy="533.6" rx="4.3" ry="3.6" transform="rotate(75 498.2 533.6)" fill="#242424"/><ellipse cx="608.6" cy="518.8" rx="6.0" ry="6.1" transform="rotate(178 608.6 518.8)" fill="#202020"/><ellipse cx="366.2" cy="682.4" rx="3.3" ry="3.1" transform="rotate(12 366.2 682.4)" fill="#242424"/><ellipse cx="686.0" cy="477.5" rx="3.9" ry="3.7" transform="rotate(68 686.0 477.5)" fill="#282828"/><ellipse cx="504.6" cy="437.4" rx="3.0" ry="2.7" transform="rotate(102 504.6 437.4)" fill="#2e2e2e"/><ellipse cx="423.4" cy="422.4" rx="5.5" ry="5.1" transform="rotate(99 423.4 422.4)" fill="#1c1c1c"/><ellipse cx="442.1" cy="627.0" rx="6.0" ry="5.3" transform="rotate(125 442.1 627.0)" fill="#242424"/><ellipse cx="601.2" cy="532.0" rx="4.9" ry="4.6" transform="rotate(154 601.2 532.0)" fill="#202020"/><ellipse cx="491.0" cy="404.9" rx="11.3" ry="10.5" transform="rotate(99 491.0 404.9)" fill="#1c1c1c"/><ellipse cx="339.0" cy="389.9" rx="5.0" ry="5.0" transform="rotate(134 339.0 389.9)" fill="#202020"/><ellipse cx="484.1" cy="554.9" rx="6.5" ry="6.2" transform="rotate(107 484.1 554.9)" fill="#1c1c1c"/><ellipse cx="518.4" cy="693.9" rx="7.9" ry="7.7" transform="rotate(106 518.4 693.9)" fill="#2e2e2e"/><ellipse cx="376.0" cy="313.4" rx="5.7" ry="6.3" transform="rotate(108 376.0 313.4)" fill="#202020"/><ellipse cx="340.5" cy="546.1" rx="4.3" ry="3.5" transform="rotate(8 340.5 546.1)" fill="#202020"/><ellipse cx="630.6" cy="575.4" rx="4.2" ry="3.7" transform="rotate(52 630.6 575.4)" fill="#242424"/><ellipse cx="554.5" cy="673.4" rx="3.8" ry="3.4" transform="rotate(173 554.5 673.4)" fill="#282828"/><ellipse cx="383.0" cy="670.7" rx="6.9" ry="6.9" transform="rotate(156 383.0 670.7)" fill="#202020"/><ellipse cx="589.7" cy="543.0" rx="7.3" ry="6.4" transform="rotate(99 589.7 543.0)" fill="#282828"/><ellipse cx="430.6" cy="494.0" rx="6.6" ry="5.5" transform="rotate(152 430.6 494.0)" fill="#282828"/><ellipse cx="261.6" cy="574.9" rx="7.4" ry="7.9" transform="rotate(160 261.6 574.9)" fill="#2e2e2e"/><ellipse cx="321.7" cy="359.3" rx="7.4" ry="6.4" transform="rotate(179 321.7 359.3)" fill="#1c1c1c"/><ellipse cx="508.6" cy="427.6" rx="6.4" ry="5.9" transform="rotate(169 508.6 427.6)" fill="#2e2e2e"/><ellipse cx="441.6" cy="473.9" rx="7.4" ry="6.2" transform="rotate(151 441.6 473.9)" fill="#282828"/><ellipse cx="579.9" cy="607.2" rx="5.3" ry="4.7" transform="rotate(86 579.9 607.2)" fill="#282828"/><ellipse cx="468.6" cy="534.6" rx="5.9" ry="5.9" transform="rotate(68 468.6 534.6)" fill="#202020"/><ellipse cx="444.7" cy="543.2" rx="3.2" ry="2.7" transform="rotate(93 444.7 543.2)" fill="#202020"/><ellipse cx="312.9" cy="516.3" rx="8.4" ry="7.8" transform="rotate(178 312.9 516.3)" fill="#202020"/><ellipse cx="276.2" cy="492.7" rx="5.7" ry="5.9" transform="rotate(152 276.2 492.7)" fill="#2e2e2e"/><ellipse cx="277.0" cy="559.6" rx="7.5" ry="6.8" transform="rotate(72 277.0 559.6)" fill="#202020"/><ellipse cx="619.1" cy="506.5" rx="9.2" ry="8.0" transform="rotate(86 619.1 506.5)" fill="#282828"/><ellipse cx="617.2" cy="402.8" rx="5.1" ry="4.8" transform="rotate(21 617.2 402.8)" fill="#1c1c1c"/><ellipse cx="582.5" cy="412.0" rx="4.9" ry="4.8" transform="rotate(72 582.5 412.0)" fill="#202020"/><ellipse cx="647.9" cy="516.1" rx="4.0" ry="4.1" transform="rotate(140 647.9 516.1)" fill="#1c1c1c"/><ellipse cx="398.2" cy="521.0" rx="8.8" ry="8.1" transform="rotate(112 398.2 521.0)" fill="#1c1c1c"/><ellipse cx="398.7" cy="554.9" rx="9.5" ry="7.7" transform="rotate(72 398.7 554.9)" fill="#282828"/><ellipse cx="259.2" cy="484.7" rx="2.7" ry="2.8" transform="rotate(138 259.2 484.7)" fill="#202020"/><ellipse cx="648.5" cy="468.0" rx="4.5" ry="5.0" transform="rotate(30 648.5 468.0)" fill="#1c1c1c"/><ellipse cx="670.6" cy="516.9" rx="5.2" ry="4.9" transform="rotate(74 670.6 516.9)" fill="#282828"/><ellipse cx="660.3" cy="508.6" rx="5.8" ry="6.1" transform="rotate(33 660.3 508.6)" fill="#202020"/><ellipse cx="340.3" cy="569.6" rx="4.5" ry="4.8" transform="rotate(29 340.3 569.6)" fill="#242424"/><ellipse cx="354.1" cy="656.9" rx="6.7" ry="6.0" transform="rotate(114 354.1 656.9)" fill="#242424"/><ellipse cx="350.4" cy="413.4" rx="5.9" ry="6.2" transform="rotate(3 350.4 413.4)" fill="#202020"/><ellipse cx="517.3" cy="413.9" rx="3.0" ry="2.9" transform="rotate(81 517.3 413.9)" fill="#242424"/><ellipse cx="318.5" cy="391.2" rx="2.8" ry="2.6" transform="rotate(90 318.5 391.2)" fill="#282828"/><ellipse cx="313.0" cy="673.1" rx="5.5" ry="6.0" transform="rotate(139 313.0 673.1)" fill="#1c1c1c"/><ellipse cx="366.9" cy="361.3" rx="5.5" ry="5.6" transform="rotate(82 366.9 361.3)" fill="#282828"/><ellipse cx="351.5" cy="509.8" rx="5.5" ry="5.4" transform="rotate(87 351.5 509.8)" fill="#1c1c1c"/><ellipse cx="340.6" cy="559.5" rx="4.2" ry="3.7" transform="rotate(43 340.6 559.5)" fill="#2e2e2e"/><ellipse cx="395.2" cy="700.2" rx="5.2" ry="5.1" transform="rotate(42 395.2 700.2)" fill="#242424"/><ellipse cx="496.5" cy="364.9" rx="3.8" ry="4.0" transform="rotate(7 496.5 364.9)" fill="#202020"/><ellipse cx="469.9" cy="350.5" rx="3.9" ry="3.9" transform="rotate(46 469.9 350.5)" fill="#202020"/><ellipse cx="309.6" cy="548.6" rx="7.6" ry="7.6" transform="rotate(90 309.6 548.6)" fill="#1c1c1c"/><ellipse cx="519.7" cy="494.7" rx="2.9" ry="2.7" transform="rotate(37 519.7 494.7)" fill="#1c1c1c"/><ellipse cx="430.3" cy="628.3" rx="4.2" ry="3.4" transform="rotate(2 430.3 628.3)" fill="#202020"/><ellipse cx="495.3" cy="526.7" rx="4.0" ry="3.4" transform="rotate(25 495.3 526.7)" fill="#202020"/><ellipse cx="334.6" cy="463.3" rx="5.9" ry="5.3" transform="rotate(86 334.6 463.3)" fill="#282828"/><ellipse cx="303.6" cy="496.8" rx="3.1" ry="2.6" transform="rotate(105 303.6 496.8)" fill="#202020"/><ellipse cx="296.5" cy="424.1" rx="2.8" ry="2.7" transform="rotate(124 296.5 424.1)" fill="#2e2e2e"/><ellipse cx="248.7" cy="504.3" rx="3.6" ry="4.2" transform="rotate(31 248.7 504.3)" fill="#2e2e2e"/><ellipse cx="604.6" cy="554.8" rx="4.1" ry="4.1" transform="rotate(80 604.6 554.8)" fill="#282828"/><ellipse cx="375.0" cy="570.7" rx="5.1" ry="4.8" transform="rotate(15 375.0 570.7)" fill="#202020"/><ellipse cx="584.8" cy="639.7" rx="5.6" ry="6.0" transform="rotate(101 584.8 639.7)" fill="#202020"/><ellipse cx="437.3" cy="618.9" rx="4.2" ry="3.7" transform="rotate(100 437.3 618.9)" fill="#1c1c1c"/><ellipse cx="519.8" cy="438.8" rx="7.2" ry="6.9" transform="rotate(4 519.8 438.8)" fill="#242424"/><ellipse cx="627.8" cy="412.6" rx="3.0" ry="2.6" transform="rotate(138 627.8 412.6)" fill="#242424"/><ellipse cx="493.3" cy="575.5" rx="4.2" ry="3.5" transform="rotate(116 493.3 575.5)" fill="#2e2e2e"/><ellipse cx="462.7" cy="602.7" rx="2.8" ry="3.1" transform="rotate(36 462.7 602.7)" fill="#242424"/><ellipse cx="552.4" cy="420.3" rx="4.3" ry="3.9" transform="rotate(116 552.4 420.3)" fill="#1c1c1c"/><ellipse cx="408.4" cy="306.9" rx="3.1" ry="2.6" transform="rotate(117 408.4 306.9)" fill="#2e2e2e"/><ellipse cx="561.4" cy="528.0" rx="3.0" ry="2.7" transform="rotate(129 561.4 528.0)" fill="#242424"/><ellipse cx="675.1" cy="526.5" rx="4.1" ry="4.1" transform="rotate(96 675.1 526.5)" fill="#2e2e2e"/><ellipse cx="386.8" cy="513.0" rx="5.6" ry="6.1" transform="rotate(110 386.8 513.0)" fill="#2e2e2e"/><ellipse cx="383.2" cy="592.3" rx="3.9" ry="3.4" transform="rotate(15 383.2 592.3)" fill="#282828"/><ellipse cx="509.7" cy="654.5" rx="2.9" ry="2.8" transform="rotate(100 509.7 654.5)" fill="#2e2e2e"/><ellipse cx="278.8" cy="582.5" rx="6.9" ry="6.0" transform="rotate(132 278.8 582.5)" fill="#282828"/><ellipse cx="379.8" cy="370.4" rx="6.9" ry="6.4" transform="rotate(152 379.8 370.4)" fill="#2e2e2e"/><ellipse cx="363.5" cy="371.0" rx="3.3" ry="2.8" transform="rotate(145 363.5 371.0)" fill="#1c1c1c"/><ellipse cx="417.9" cy="414.4" rx="3.9" ry="3.9" transform="rotate(176 417.9 414.4)" fill="#242424"/><ellipse cx="427.7" cy="318.6" rx="4.1" ry="4.1" transform="rotate(11 427.7 318.6)" fill="#282828"/><ellipse cx="399.0" cy="453.0" rx="4.1" ry="4.0" transform="rotate(171 399.0 453.0)" fill="#202020"/><ellipse cx="407.9" cy="360.3" rx="6.9" ry="6.0" transform="rotate(168 407.9 360.3)" fill="#242424"/><ellipse cx="420.4" cy="635.4" rx="3.8" ry="3.9" transform="rotate(90 420.4 635.4)" fill="#282828"/><ellipse cx="274.6" cy="515.2" rx="5.2" ry="4.8" transform="rotate(146 274.6 515.2)" fill="#282828"/><ellipse cx="265.8" cy="468.0" rx="5.2" ry="5.0" transform="rotate(162 265.8 468.0)" fill="#1c1c1c"/><ellipse cx="637.4" cy="501.5" rx="8.1" ry="8.1" transform="rotate(10 637.4 501.5)" fill="#242424"/><ellipse cx="481.6" cy="628.2" rx="2.9" ry="2.9" transform="rotate(41 481.6 628.2)" fill="#202020"/><ellipse cx="674.9" cy="574.9" rx="3.3" ry="2.7" transform="rotate(36 674.9 574.9)" fill="#1c1c1c"/><ellipse cx="366.2" cy="667.3" rx="3.2" ry="3.1" transform="rotate(78 366.2 667.3)" fill="#282828"/><ellipse cx="246.8" cy="562.2" rx="5.9" ry="5.1" transform="rotate(42 246.8 562.2)" fill="#202020"/><ellipse cx="293.9" cy="503.8" rx="2.9" ry="2.6" transform="rotate(153 293.9 503.8)" fill="#282828"/><ellipse cx="537.5" cy="672.5" rx="7.4" ry="8.2" transform="rotate(41 537.5 672.5)" fill="#242424"/><ellipse cx="390.5" cy="313.3" rx="5.0" ry="4.9" transform="rotate(179 390.5 313.3)" fill="#1c1c1c"/><ellipse cx="571.3" cy="395.8" rx="3.8" ry="3.7" transform="rotate(145 571.3 395.8)" fill="#282828"/><ellipse cx="633.1" cy="609.5" rx="6.6" ry="5.6" transform="rotate(128 633.1 609.5)" fill="#1c1c1c"/><ellipse cx="247.1" cy="520.4" rx="9.3" ry="8.4" transform="rotate(8 247.1 520.4)" fill="#202020"/><ellipse cx="394.8" cy="654.3" rx="4.1" ry="3.8" transform="rotate(168 394.8 654.3)" fill="#282828"/><ellipse cx="364.4" cy="626.6" rx="3.3" ry="2.8" transform="rotate(16 364.4 626.6)" fill="#202020"/><ellipse cx="504.9" cy="626.2" rx="4.6" ry="4.7" transform="rotate(70 504.9 626.2)" fill="#1c1c1c"/><ellipse cx="348.1" cy="369.7" rx="3.6" ry="4.1" transform="rotate(176 348.1 369.7)" fill="#1c1c1c"/><ellipse cx="496.5" cy="552.9" rx="3.2" ry="3.1" transform="rotate(99 496.5 552.9)" fill="#282828"/><ellipse cx="458.4" cy="687.0" rx="4.7" ry="4.4" transform="rotate(140 458.4 687.0)" fill="#2e2e2e"/><ellipse cx="381.9" cy="549.8" rx="3.1" ry="3.0" transform="rotate(72 381.9 549.8)" fill="#1c1c1c"/><ellipse cx="340.6" cy="374.8" rx="5.8" ry="5.8" transform="rotate(25 340.6 374.8)" fill="#202020"/><ellipse cx="690.3" cy="508.2" rx="3.7" ry="4.2" transform="rotate(30 690.3 508.2)" fill="#282828"/><ellipse cx="459.5" cy="337.7" rx="4.2" ry="3.4" transform="rotate(73 459.5 337.7)" fill="#282828"/><ellipse cx="627.6" cy="492.3" rx="3.8" ry="4.1" transform="rotate(165 627.6 492.3)" fill="#282828"/><ellipse cx="562.9" cy="483.8" rx="4.2" ry="4.1" transform="rotate(143 562.9 483.8)" fill="#202020"/><ellipse cx="426.3" cy="439.9" rx="4.8" ry="4.9" transform="rotate(63 426.3 439.9)" fill="#282828"/><ellipse cx="522.0" cy="384.4" rx="4.8" ry="4.3" transform="rotate(125 522.0 384.4)" fill="#282828"/><ellipse cx="728.1" cy="566.1" rx="4.1" ry="4.0" transform="rotate(46 728.1 566.1)" fill="#2e2e2e"/><ellipse cx="428.1" cy="413.2" rx="2.8" ry="2.8" transform="rotate(165 428.1 413.2)" fill="#2e2e2e"/><ellipse cx="657.1" cy="437.2" rx="4.7" ry="5.1" transform="rotate(103 657.1 437.2)" fill="#1c1c1c"/><ellipse cx="663.7" cy="598.1" rx="3.7" ry="3.8" transform="rotate(172 663.7 598.1)" fill="#282828"/><ellipse cx="534.4" cy="661.7" rx="3.1" ry="3.0" transform="rotate(30 534.4 661.7)" fill="#2e2e2e"/><ellipse cx="611.2" cy="440.1" rx="4.0" ry="3.9" transform="rotate(91 611.2 440.1)" fill="#2e2e2e"/><ellipse cx="542.8" cy="575.3" rx="4.1" ry="4.0" transform="rotate(80 542.8 575.3)" fill="#1c1c1c"/><ellipse cx="672.3" cy="615.9" rx="5.4" ry="4.6" transform="rotate(122 672.3 615.9)" fill="#2e2e2e"/><ellipse cx="671.1" cy="593.1" rx="5.6" ry="6.0" transform="rotate(114 671.1 593.1)" fill="#2e2e2e"/><ellipse cx="598.6" cy="419.4" rx="6.2" ry="6.0" transform="rotate(95 598.6 419.4)" fill="#282828"/><ellipse cx="389.3" cy="621.6" rx="3.9" ry="3.5" transform="rotate(24 389.3 621.6)" fill="#242424"/><ellipse cx="285.1" cy="437.4" rx="3.9" ry="3.5" transform="rotate(174 285.1 437.4)" fill="#2e2e2e"/><ellipse cx="290.2" cy="590.3" rx="4.6" ry="4.3" transform="rotate(17 290.2 590.3)" fill="#202020"/><ellipse cx="359.8" cy="692.6" rx="6.8" ry="6.1" transform="rotate(144 359.8 692.6)" fill="#242424"/><ellipse cx="523.9" cy="583.4" rx="3.9" ry="4.2" transform="rotate(13 523.9 583.4)" fill="#2e2e2e"/><ellipse cx="386.3" cy="659.9" rx="3.8" ry="3.7" transform="rotate(162 386.3 659.9)" fill="#282828"/><ellipse cx="397.2" cy="303.1" rx="5.8" ry="6.3" transform="rotate(107 397.2 303.1)" fill="#242424"/><ellipse cx="563.2" cy="665.2" rx="2.9" ry="2.9" transform="rotate(161 563.2 665.2)" fill="#282828"/><ellipse cx="655.3" cy="473.2" rx="2.8" ry="2.6" transform="rotate(126 655.3 473.2)" fill="#202020"/><ellipse cx="703.3" cy="577.3" rx="4.1" ry="3.7" transform="rotate(133 703.3 577.3)" fill="#242424"/><ellipse cx="368.7" cy="675.6" rx="2.9" ry="2.7" transform="rotate(69 368.7 675.6)" fill="#282828"/><ellipse cx="516.3" cy="677.8" rx="3.0" ry="2.6" transform="rotate(2 516.3 677.8)" fill="#1c1c1c"/><ellipse cx="329.6" cy="588.5" rx="3.2" ry="2.6" transform="rotate(141 329.6 588.5)" fill="#242424"/><ellipse cx="609.3" cy="402.2" rx="2.8" ry="2.7" transform="rotate(156 609.3 402.2)" fill="#2e2e2e"/><ellipse cx="533.0" cy="509.1" rx="3.2" ry="2.8" transform="rotate(142 533.0 509.1)" fill="#1c1c1c"/><ellipse cx="646.8" cy="563.4" rx="3.3" ry="2.8" transform="rotate(127 646.8 563.4)" fill="#1c1c1c"/><ellipse cx="528.8" cy="496.0" rx="4.4" ry="4.0" transform="rotate(141 528.8 496.0)" fill="#1c1c1c"/><ellipse cx="329.1" cy="562.1" rx="3.8" ry="3.6" transform="rotate(98 329.1 562.1)" fill="#202020"/><ellipse cx="565.7" cy="475.6" rx="3.2" ry="2.9" transform="rotate(158 565.7 475.6)" fill="#202020"/><ellipse cx="633.9" cy="555.2" rx="4.5" ry="5.0" transform="rotate(17 633.9 555.2)" fill="#2e2e2e"/><ellipse cx="455.8" cy="567.5" rx="3.9" ry="4.0" transform="rotate(124 455.8 567.5)" fill="#242424"/><ellipse cx="397.6" cy="465.7" rx="4.0" ry="3.8" transform="rotate(91 397.6 465.7)" fill="#2e2e2e"/><ellipse cx="431.1" cy="655.6" rx="2.9" ry="3.1" transform="rotate(173 431.1 655.6)" fill="#1c1c1c"/><ellipse cx="425.3" cy="480.8" rx="6.2" ry="5.2" transform="rotate(72 425.3 480.8)" fill="#202020"/><ellipse cx="677.8" cy="536.5" rx="5.5" ry="4.9" transform="rotate(84 677.8 536.5)" fill="#2e2e2e"/><ellipse cx="441.5" cy="463.2" rx="2.9" ry="3.1" transform="rotate(175 441.5 463.2)" fill="#282828"/><ellipse cx="556.1" cy="521.9" rx="3.2" ry="3.1" transform="rotate(141 556.1 521.9)" fill="#282828"/><ellipse cx="577.5" cy="386.6" rx="6.9" ry="6.8" transform="rotate(86 577.5 386.6)" fill="#2e2e2e"/><ellipse cx="445.0" cy="451.9" rx="3.2" ry="3.0" transform="rotate(166 445.0 451.9)" fill="#2e2e2e"/><ellipse cx="429.4" cy="637.4" rx="4.8" ry="5.2" transform="rotate(107 429.4 637.4)" fill="#242424"/><ellipse cx="342.5" cy="539.9" rx="3.2" ry="2.9" transform="rotate(0 342.5 539.9)" fill="#282828"/><ellipse cx="312.5" cy="612.2" rx="3.1" ry="2.9" transform="rotate(4 312.5 612.2)" fill="#1c1c1c"/><ellipse cx="304.6" cy="399.6" rx="9.6" ry="10.0" transform="rotate(34 304.6 399.6)" fill="#202020"/><ellipse cx="483.0" cy="637.6" rx="4.0" ry="3.5" transform="rotate(64 483.0 637.6)" fill="#2e2e2e"/><ellipse cx="645.1" cy="475.1" rx="2.8" ry="2.7" transform="rotate(32 645.1 475.1)" fill="#282828"/><ellipse cx="637.9" cy="422.4" rx="3.1" ry="2.7" transform="rotate(167 637.9 422.4)" fill="#2e2e2e"/><ellipse cx="328.8" cy="305.4" rx="5.8" ry="6.1" transform="rotate(107 328.8 305.4)" fill="#1c1c1c"/><ellipse cx="511.0" cy="491.7" rx="3.1" ry="3.1" transform="rotate(36 511.0 491.7)" fill="#242424"/><ellipse cx="435.8" cy="326.4" rx="4.9" ry="4.9" transform="rotate(158 435.8 326.4)" fill="#2e2e2e"/><ellipse cx="368.9" cy="524.2" rx="6.5" ry="6.1" transform="rotate(17 368.9 524.2)" fill="#242424"/><ellipse cx="505.2" cy="687.3" rx="3.3" ry="2.7" transform="rotate(72 505.2 687.3)" fill="#1c1c1c"/><ellipse cx="601.1" cy="493.2" rx="7.2" ry="6.3" transform="rotate(108 601.1 493.2)" fill="#2e2e2e"/><ellipse cx="423.6" cy="377.9" rx="4.9" ry="4.9" transform="rotate(143 423.6 377.9)" fill="#202020"/><ellipse cx="393.4" cy="671.6" rx="4.2" ry="3.8" transform="rotate(142 393.4 671.6)" fill="#282828"/><ellipse cx="323.8" cy="548.5" rx="3.2" ry="2.7" transform="rotate(13 323.8 548.5)" fill="#282828"/><ellipse cx="567.4" cy="672.0" rx="3.0" ry="3.0" transform="rotate(37 567.4 672.0)" fill="#202020"/><ellipse cx="542.0" cy="597.2" rx="3.7" ry="4.0" transform="rotate(103 542.0 597.2)" fill="#282828"/><ellipse cx="600.5" cy="475.7" rx="4.6" ry="4.9" transform="rotate(110 600.5 475.7)" fill="#202020"/><ellipse cx="471.7" cy="631.8" rx="5.0" ry="4.5" transform="rotate(19 471.7 631.8)" fill="#202020"/><ellipse cx="282.0" cy="596.3" rx="2.7" ry="2.6" transform="rotate(5 282.0 596.3)" fill="#202020"/><ellipse cx="500.0" cy="503.8" rx="4.3" ry="3.8" transform="rotate(114 500.0 503.8)" fill="#2e2e2e"/><ellipse cx="428.6" cy="612.5" rx="4.6" ry="5.2" transform="rotate(60 428.6 612.5)" fill="#242424"/><ellipse cx="599.2" cy="525.2" rx="2.9" ry="3.1" transform="rotate(96 599.2 525.2)" fill="#1c1c1c"/><ellipse cx="374.0" cy="332.2" rx="2.7" ry="2.7" transform="rotate(19 374.0 332.2)" fill="#2e2e2e"/><ellipse cx="495.0" cy="546.7" rx="2.7" ry="3.1" transform="rotate(90 495.0 546.7)" fill="#2e2e2e"/><ellipse cx="364.2" cy="537.2" rx="3.8" ry="3.9" transform="rotate(30 364.2 537.2)" fill="#1c1c1c"/><ellipse cx="509.4" cy="619.0" rx="3.1" ry="3.0" transform="rotate(56 509.4 619.0)" fill="#2e2e2e"/><ellipse cx="381.1" cy="330.4" rx="2.8" ry="3.0" transform="rotate(120 381.1 330.4)" fill="#242424"/><ellipse cx="516.0" cy="647.7" rx="4.0" ry="3.6" transform="rotate(33 516.0 647.7)" fill="#2e2e2e"/><ellipse cx="328.0" cy="376.7" rx="4.7" ry="4.6" transform="rotate(129 328.0 376.7)" fill="#242424"/><ellipse cx="570.8" cy="694.7" rx="7.9" ry="7.2" transform="rotate(23 570.8 694.7)" fill="#282828"/><ellipse cx="377.3" cy="296.9" rx="3.1" ry="2.8" transform="rotate(132 377.3 296.9)" fill="#1c1c1c"/><ellipse cx="425.0" cy="540.4" rx="3.1" ry="3.1" transform="rotate(77 425.0 540.4)" fill="#242424"/><ellipse cx="535.4" cy="589.0" rx="3.2" ry="3.0" transform="rotate(119 535.4 589.0)" fill="#282828"/><ellipse cx="440.6" cy="441.2" rx="3.0" ry="2.7" transform="rotate(164 440.6 441.2)" fill="#2e2e2e"/><ellipse cx="471.8" cy="576.3" rx="3.0" ry="3.0" transform="rotate(145 471.8 576.3)" fill="#202020"/><ellipse cx="628.2" cy="654.6" rx="4.3" ry="3.7" transform="rotate(94 628.2 654.6)" fill="#282828"/><ellipse cx="499.1" cy="580.5" rx="3.8" ry="3.7" transform="rotate(11 499.1 580.5)" fill="#202020"/><ellipse cx="367.9" cy="608.1" rx="3.0" ry="3.0" transform="rotate(170 367.9 608.1)" fill="#282828"/><ellipse cx="292.6" cy="434.1" rx="3.7" ry="3.4" transform="rotate(110 292.6 434.1)" fill="#242424"/><ellipse cx="294.3" cy="573.5" rx="3.0" ry="3.1" transform="rotate(94 294.3 573.5)" fill="#2e2e2e"/><ellipse cx="493.6" cy="438.5" rx="2.8" ry="2.7" transform="rotate(163 493.6 438.5)" fill="#2e2e2e"/><ellipse cx="387.8" cy="522.8" rx="2.8" ry="2.6" transform="rotate(15 387.8 522.8)" fill="#242424"/><ellipse cx="448.2" cy="444.7" rx="3.1" ry="2.7" transform="rotate(54 448.2 444.7)" fill="#282828"/><ellipse cx="681.5" cy="585.1" rx="6.4" ry="6.1" transform="rotate(111 681.5 585.1)" fill="#282828"/><ellipse cx="641.1" cy="441.8" rx="2.7" ry="2.7" transform="rotate(81 641.1 441.8)" fill="#242424"/><ellipse cx="676.2" cy="473.5" rx="5.4" ry="4.3" transform="rotate(86 676.2 473.5)" fill="#282828"/><ellipse cx="504.3" cy="661.4" rx="3.2" ry="2.6" transform="rotate(104 504.3 661.4)" fill="#202020"/><ellipse cx="378.8" cy="598.4" rx="3.3" ry="2.6" transform="rotate(149 378.8 598.4)" fill="#202020"/><ellipse cx="409.7" cy="498.5" rx="2.9" ry="3.1" transform="rotate(70 409.7 498.5)" fill="#282828"/><ellipse cx="569.0" cy="561.8" rx="2.9" ry="2.6" transform="rotate(169 569.0 561.8)" fill="#1c1c1c"/><ellipse cx="313.9" cy="427.3" rx="5.3" ry="4.7" transform="rotate(79 313.9 427.3)" fill="#1c1c1c"/><ellipse cx="369.8" cy="601.1" rx="3.7" ry="3.6" transform="rotate(173 369.8 601.1)" fill="#282828"/><ellipse cx="496.9" cy="638.8" rx="4.0" ry="4.0" transform="rotate(135 496.9 638.8)" fill="#202020"/><ellipse cx="603.4" cy="544.8" rx="5.3" ry="5.1" transform="rotate(130 603.4 544.8)" fill="#1c1c1c"/><ellipse cx="580.5" cy="683.4" rx="7.6" ry="7.2" transform="rotate(169 580.5 683.4)" fill="#242424"/><ellipse cx="480.2" cy="489.5" rx="3.2" ry="2.8" transform="rotate(157 480.2 489.5)" fill="#242424"/><ellipse cx="342.1" cy="488.6" rx="4.1" ry="4.1" transform="rotate(123 342.1 488.6)" fill="#282828"/><ellipse cx="405.4" cy="414.3" rx="3.6" ry="3.6" transform="rotate(64 405.4 414.3)" fill="#1c1c1c"/><ellipse cx="270.8" cy="568.8" rx="3.8" ry="3.6" transform="rotate(163 270.8 568.8)" fill="#202020"/><ellipse cx="416.9" cy="575.4" rx="3.2" ry="2.8" transform="rotate(160 416.9 575.4)" fill="#202020"/><ellipse cx="492.1" cy="629.9" rx="6.3" ry="5.8" transform="rotate(5 492.1 629.9)" fill="#202020"/><ellipse cx="431.6" cy="359.5" rx="2.9" ry="2.7" transform="rotate(127 431.6 359.5)" fill="#242424"/><ellipse cx="505.2" cy="443.3" rx="2.9" ry="2.7" transform="rotate(143 505.2 443.3)" fill="#202020"/><ellipse cx="310.0" cy="598.4" rx="6.1" ry="6.2" transform="rotate(66 310.0 598.4)" fill="#2e2e2e"/><ellipse cx="560.3" cy="384.7" rx="4.1" ry="3.6" transform="rotate(123 560.3 384.7)" fill="#202020"/><ellipse cx="338.0" cy="357.8" rx="2.9" ry="2.6" transform="rotate(138 338.0 357.8)" fill="#282828"/><ellipse cx="593.2" cy="529.4" rx="3.3" ry="2.9" transform="rotate(148 593.2 529.4)" fill="#202020"/><ellipse cx="520.4" cy="409.3" rx="2.7" ry="2.6" transform="rotate(61 520.4 409.3)" fill="#282828"/><ellipse cx="282.2" cy="530.3" rx="4.3" ry="3.9" transform="rotate(149 282.2 530.3)" fill="#2e2e2e"/><ellipse cx="382.1" cy="559.5" rx="4.9" ry="5.2" transform="rotate(138 382.1 559.5)" fill="#242424"/><ellipse cx="608.3" cy="585.1" rx="4.2" ry="4.1" transform="rotate(78 608.3 585.1)" fill="#282828"/><ellipse cx="481.2" cy="353.1" rx="2.9" ry="2.8" transform="rotate(36 481.2 353.1)" fill="#282828"/><ellipse cx="322.7" cy="564.3" rx="3.0" ry="2.8" transform="rotate(68 322.7 564.3)" fill="#1c1c1c"/><ellipse cx="350.0" cy="457.6" rx="4.3" ry="3.8" transform="rotate(155 350.0 457.6)" fill="#242424"/><ellipse cx="466.3" cy="690.5" rx="5.1" ry="4.5" transform="rotate(58 466.3 690.5)" fill="#202020"/><ellipse cx="316.3" cy="482.8" rx="4.0" ry="3.8" transform="rotate(74 316.3 482.8)" fill="#2e2e2e"/><ellipse cx="511.4" cy="613.5" rx="2.7" ry="2.7" transform="rotate(109 511.4 613.5)" fill="#202020"/><ellipse cx="548.8" cy="648.2" rx="3.9" ry="3.8" transform="rotate(139 548.8 648.2)" fill="#242424"/><ellipse cx="597.9" cy="600.6" rx="3.8" ry="3.6" transform="rotate(88 597.9 600.6)" fill="#2e2e2e"/><ellipse cx="559.9" cy="420.9" rx="2.8" ry="3.1" transform="rotate(28 559.9 420.9)" fill="#2e2e2e"/><ellipse cx="670.2" cy="637.2" rx="8.0" ry="8.4" transform="rotate(89 670.2 637.2)" fill="#2e2e2e"/><ellipse cx="382.2" cy="503.8" rx="3.0" ry="2.8" transform="rotate(78 382.2 503.8)" fill="#242424"/><ellipse cx="513.3" cy="558.6" rx="4.1" ry="4.1" transform="rotate(122 513.3 558.6)" fill="#202020"/><ellipse cx="364.8" cy="563.5" rx="2.9" ry="2.7" transform="rotate(16 364.8 563.5)" fill="#282828"/><ellipse cx="319.5" cy="526.9" rx="3.7" ry="4.2" transform="rotate(157 319.5 526.9)" fill="#242424"/><ellipse cx="403.6" cy="644.5" rx="5.1" ry="4.8" transform="rotate(3 403.6 644.5)" fill="#2e2e2e"/><ellipse cx="263.0" cy="514.8" rx="6.8" ry="6.1" transform="rotate(151 263.0 514.8)" fill="#2e2e2e"/><ellipse cx="431.3" cy="604.8" rx="2.9" ry="3.0" transform="rotate(75 431.3 604.8)" fill="#2e2e2e"/><ellipse cx="403.8" cy="606.3" rx="6.2" ry="5.5" transform="rotate(114 403.8 606.3)" fill="#202020"/><ellipse cx="381.8" cy="631.3" rx="2.8" ry="3.1" transform="rotate(38 381.8 631.3)" fill="#282828"/><ellipse cx="503.9" cy="344.1" rx="6.1" ry="5.7" transform="rotate(44 503.9 344.1)" fill="#282828"/><ellipse cx="357.8" cy="679.3" rx="5.1" ry="5.2" transform="rotate(179 357.8 679.3)" fill="#1c1c1c"/><ellipse cx="513.1" cy="420.2" rx="2.8" ry="2.6" transform="rotate(121 513.1 420.2)" fill="#2e2e2e"/><ellipse cx="434.5" cy="346.7" rx="3.9" ry="4.1" transform="rotate(9 434.5 346.7)" fill="#2e2e2e"/><ellipse cx="292.3" cy="612.4" rx="7.7" ry="7.5" transform="rotate(155 292.3 612.4)" fill="#282828"/><ellipse cx="498.2" cy="429.4" rx="3.2" ry="2.8" transform="rotate(106 498.2 429.4)" fill="#202020"/><ellipse cx="395.6" cy="330.7" rx="3.2" ry="2.8" transform="rotate(37 395.6 330.7)" fill="#242424"/><ellipse cx="540.5" cy="515.1" rx="6.4" ry="5.2" transform="rotate(52 540.5 515.1)" fill="#282828"/><ellipse cx="402.7" cy="704.3" rx="2.8" ry="3.0" transform="rotate(175 402.7 704.3)" fill="#2e2e2e"/><ellipse cx="439.1" cy="416.9" rx="5.2" ry="4.5" transform="rotate(153 439.1 416.9)" fill="#282828"/><ellipse cx="362.0" cy="644.9" rx="6.1" ry="6.1" transform="rotate(2 362.0 644.9)" fill="#2e2e2e"/><ellipse cx="528.2" cy="700.6" rx="5.0" ry="4.6" transform="rotate(110 528.2 700.6)" fill="#1c1c1c"/><ellipse cx="265.2" cy="495.4" rx="4.3" ry="3.5" transform="rotate(173 265.2 495.4)" fill="#242424"/><ellipse cx="533.3" cy="611.4" rx="2.8" ry="3.0" transform="rotate(100 533.3 611.4)" fill="#2e2e2e"/><ellipse cx="268.3" cy="506.2" rx="4.3" ry="3.8" transform="rotate(79 268.3 506.2)" fill="#1c1c1c"/><ellipse cx="416.8" cy="614.2" rx="2.8" ry="2.6" transform="rotate(31 416.8 614.2)" fill="#2e2e2e"/><ellipse cx="653.6" cy="497.8" rx="3.3" ry="2.6" transform="rotate(104 653.6 497.8)" fill="#242424"/><ellipse cx="374.3" cy="676.9" rx="3.0" ry="2.8" transform="rotate(72 374.3 676.9)" fill="#2e2e2e"/><ellipse cx="550.2" cy="473.2" rx="3.6" ry="3.8" transform="rotate(127 550.2 473.2)" fill="#282828"/><ellipse cx="444.5" cy="617.6" rx="4.1" ry="3.7" transform="rotate(40 444.5 617.6)" fill="#202020"/><ellipse cx="547.4" cy="609.4" rx="4.2" ry="3.6" transform="rotate(150 547.4 609.4)" fill="#282828"/><ellipse cx="608.8" cy="395.3" rx="3.7" ry="3.5" transform="rotate(150 608.8 395.3)" fill="#282828"/><ellipse cx="475.2" cy="653.4" rx="2.8" ry="3.0" transform="rotate(40 475.2 653.4)" fill="#242424"/><ellipse cx="533.8" cy="435.8" rx="4.0" ry="3.9" transform="rotate(100 533.8 435.8)" fill="#282828"/><ellipse cx="269.6" cy="605.6" rx="4.3" ry="3.9" transform="rotate(105 269.6 605.6)" fill="#1c1c1c"/><ellipse cx="646.6" cy="441.9" rx="2.8" ry="3.1" transform="rotate(29 646.6 441.9)" fill="#202020"/><ellipse cx="598.3" cy="561.5" rx="5.2" ry="4.9" transform="rotate(150 598.3 561.5)" fill="#202020"/><ellipse cx="377.8" cy="535.6" rx="3.1" ry="2.9" transform="rotate(116 377.8 535.6)" fill="#282828"/><ellipse cx="517.7" cy="619.0" rx="6.0" ry="5.3" transform="rotate(170 517.7 619.0)" fill="#1c1c1c"/><ellipse cx="447.1" cy="481.9" rx="2.8" ry="3.0" transform="rotate(130 447.1 481.9)" fill="#282828"/><ellipse cx="571.5" cy="655.4" rx="4.2" ry="3.9" transform="rotate(101 571.5 655.4)" fill="#242424"/><ellipse cx="332.5" cy="350.5" rx="2.8" ry="2.8" transform="rotate(91 332.5 350.5)" fill="#2e2e2e"/><ellipse cx="546.0" cy="431.8" rx="4.7" ry="5.0" transform="rotate(4 546.0 431.8)" fill="#282828"/><ellipse cx="389.4" cy="579.0" rx="2.8" ry="3.0" transform="rotate(175 389.4 579.0)" fill="#2e2e2e"/><ellipse cx="331.0" cy="488.5" rx="4.0" ry="3.5" transform="rotate(48 331.0 488.5)" fill="#202020"/><ellipse cx="426.8" cy="392.2" rx="3.0" ry="2.8" transform="rotate(49 426.8 392.2)" fill="#282828"/><ellipse cx="586.6" cy="658.7" rx="3.2" ry="2.8" transform="rotate(99 586.6 658.7)" fill="#282828"/><ellipse cx="395.2" cy="635.2" rx="5.2" ry="4.8" transform="rotate(56 395.2 635.2)" fill="#242424"/><ellipse cx="701.9" cy="566.1" rx="3.2" ry="2.8" transform="rotate(69 701.9 566.1)" fill="#1c1c1c"/><ellipse cx="474.3" cy="543.5" rx="4.3" ry="3.5" transform="rotate(50 474.3 543.5)" fill="#1c1c1c"/><ellipse cx="618.2" cy="635.3" rx="8.0" ry="7.1" transform="rotate(28 618.2 635.3)" fill="#282828"/><ellipse cx="339.7" cy="472.0" rx="3.2" ry="3.0" transform="rotate(44 339.7 472.0)" fill="#2e2e2e"/><ellipse cx="328.4" cy="501.2" rx="3.7" ry="3.6" transform="rotate(60 328.4 501.2)" fill="#202020"/><ellipse cx="341.5" cy="448.1" rx="3.1" ry="2.9" transform="rotate(86 341.5 448.1)" fill="#1c1c1c"/><ellipse cx="542.5" cy="614.7" rx="3.3" ry="2.8" transform="rotate(63 542.5 614.7)" fill="#2e2e2e"/><ellipse cx="383.3" cy="320.1" rx="2.8" ry="2.8" transform="rotate(61 383.3 320.1)" fill="#1c1c1c"/><ellipse cx="264.2" cy="561.8" rx="3.2" ry="2.9" transform="rotate(137 264.2 561.8)" fill="#2e2e2e"/><ellipse cx="430.6" cy="551.5" rx="3.0" ry="3.0" transform="rotate(64 430.6 551.5)" fill="#282828"/><ellipse cx="353.1" cy="497.4" rx="5.1" ry="4.3" transform="rotate(112 353.1 497.4)" fill="#282828"/><ellipse cx="363.5" cy="569.8" rx="2.9" ry="2.6" transform="rotate(132 363.5 569.8)" fill="#202020"/><ellipse cx="506.3" cy="376.6" rx="2.9" ry="2.9" transform="rotate(91 506.3 376.6)" fill="#242424"/><ellipse cx="614.6" cy="571.4" rx="4.8" ry="4.6" transform="rotate(100 614.6 571.4)" fill="#242424"/><ellipse cx="328.6" cy="529.5" rx="3.1" ry="2.9" transform="rotate(125 328.6 529.5)" fill="#1c1c1c"/><ellipse cx="710.4" cy="509.0" rx="3.1" ry="2.6" transform="rotate(68 710.4 509.0)" fill="#2e2e2e"/><ellipse cx="422.7" cy="403.6" rx="4.9" ry="5.0" transform="rotate(104 422.7 403.6)" fill="#1c1c1c"/><ellipse cx="234.7" cy="563.6" rx="4.1" ry="3.5" transform="rotate(83 234.7 563.6)" fill="#2e2e2e"/><ellipse cx="591.1" cy="603.6" rx="2.9" ry="2.6" transform="rotate(145 591.1 603.6)" fill="#1c1c1c"/><ellipse cx="606.0" cy="510.4" rx="3.2" ry="3.0" transform="rotate(161 606.0 510.4)" fill="#1c1c1c"/><ellipse cx="224.1" cy="598.2" rx="6.5" ry="5.9" transform="rotate(150 224.1 598.2)" fill="#2e2e2e"/><ellipse cx="419.1" cy="437.8" rx="3.0" ry="2.9" transform="rotate(142 419.1 437.8)" fill="#202020"/><ellipse cx="401.1" cy="434.5" rx="3.3" ry="2.7" transform="rotate(115 401.1 434.5)" fill="#1c1c1c"/><ellipse cx="335.1" cy="611.4" rx="3.9" ry="3.8" transform="rotate(80 335.1 611.4)" fill="#1c1c1c"/><ellipse cx="292.3" cy="411.2" rx="5.5" ry="4.4" transform="rotate(111 292.3 411.2)" fill="#282828"/><ellipse cx="695.4" cy="568.6" rx="3.2" ry="3.1" transform="rotate(14 695.4 568.6)" fill="#282828"/><ellipse cx="398.0" cy="573.1" rx="3.1" ry="2.7" transform="rotate(108 398.0 573.1)" fill="#1c1c1c"/><ellipse cx="400.9" cy="445.7" rx="2.7" ry="2.6" transform="rotate(155 400.9 445.7)" fill="#2e2e2e"/><ellipse cx="601.9" cy="583.3" rx="2.9" ry="2.7" transform="rotate(108 601.9 583.3)" fill="#242424"/><ellipse cx="487.0" cy="644.9" rx="5.4" ry="4.8" transform="rotate(33 487.0 644.9)" fill="#282828"/><ellipse cx="369.2" cy="652.3" rx="4.6" ry="4.5" transform="rotate(168 369.2 652.3)" fill="#282828"/><ellipse cx="381.4" cy="380.7" rx="3.2" ry="2.6" transform="rotate(93 381.4 380.7)" fill="#202020"/><ellipse cx="522.0" cy="550.8" rx="6.1" ry="5.1" transform="rotate(77 522.0 550.8)" fill="#2e2e2e"/><ellipse cx="343.8" cy="433.2" rx="4.2" ry="3.6" transform="rotate(39 343.8 433.2)" fill="#2e2e2e"/><ellipse cx="664.3" cy="466.1" rx="2.9" ry="3.0" transform="rotate(130 664.3 466.1)" fill="#282828"/><ellipse cx="306.0" cy="427.4" rx="3.1" ry="2.8" transform="rotate(180 306.0 427.4)" fill="#202020"/><ellipse cx="506.7" cy="409.3" rx="4.2" ry="4.1" transform="rotate(179 506.7 409.3)" fill="#282828"/><ellipse cx="519.6" cy="395.0" rx="3.1" ry="3.1" transform="rotate(90 519.6 395.0)" fill="#1c1c1c"/><ellipse cx="623.9" cy="535.3" rx="5.2" ry="4.3" transform="rotate(76 623.9 535.3)" fill="#282828"/><ellipse cx="329.0" cy="535.6" rx="3.0" ry="2.7" transform="rotate(153 329.0 535.6)" fill="#202020"/><ellipse cx="302.0" cy="524.2" rx="4.1" ry="4.0" transform="rotate(72 302.0 524.2)" fill="#2e2e2e"/><ellipse cx="425.7" cy="528.1" rx="3.1" ry="3.0" transform="rotate(87 425.7 528.1)" fill="#202020"/><ellipse cx="664.0" cy="623.8" rx="3.1" ry="3.1" transform="rotate(136 664.0 623.8)" fill="#202020"/><ellipse cx="633.1" cy="589.2" rx="4.5" ry="4.7" transform="rotate(18 633.1 589.2)" fill="#282828"/><ellipse cx="731.1" cy="558.5" rx="3.6" ry="3.6" transform="rotate(73 731.1 558.5)" fill="#202020"/><ellipse cx="566.7" cy="374.0" rx="4.3" ry="4.2" transform="rotate(160 566.7 374.0)" fill="#1c1c1c"/><ellipse cx="421.3" cy="669.0" rx="3.8" ry="3.9" transform="rotate(55 421.3 669.0)" fill="#202020"/><ellipse cx="322.9" cy="506.5" rx="2.9" ry="3.0" transform="rotate(180 322.9 506.5)" fill="#2e2e2e"/><ellipse cx="458.1" cy="609.2" rx="4.7" ry="4.7" transform="rotate(122 458.1 609.2)" fill="#202020"/><ellipse cx="647.6" cy="508.8" rx="3.0" ry="2.6" transform="rotate(128 647.6 508.8)" fill="#202020"/><ellipse cx="412.0" cy="419.0" rx="3.1" ry="2.8" transform="rotate(126 412.0 419.0)" fill="#1c1c1c"/><ellipse cx="446.2" cy="527.2" rx="4.2" ry="3.8" transform="rotate(77 446.2 527.2)" fill="#282828"/><ellipse cx="459.8" cy="349.4" rx="3.3" ry="3.1" transform="rotate(138 459.8 349.4)" fill="#202020"/><ellipse cx="676.9" cy="454.6" rx="3.0" ry="2.8" transform="rotate(60 676.9 454.6)" fill="#2e2e2e"/><ellipse cx="475.6" cy="639.9" rx="2.9" ry="2.7" transform="rotate(128 475.6 639.9)" fill="#202020"/><ellipse cx="252.2" cy="539.9" rx="4.2" ry="3.9" transform="rotate(131 252.2 539.9)" fill="#1c1c1c"/><ellipse cx="269.2" cy="460.8" rx="2.9" ry="2.9" transform="rotate(6 269.2 460.8)" fill="#242424"/><ellipse cx="382.0" cy="651.6" rx="2.9" ry="2.8" transform="rotate(72 382.0 651.6)" fill="#242424"/><ellipse cx="439.2" cy="319.3" rx="3.2" ry="3.0" transform="rotate(125 439.2 319.3)" fill="#1c1c1c"/><ellipse cx="392.2" cy="646.8" rx="4.0" ry="3.6" transform="rotate(134 392.2 646.8)" fill="#1c1c1c"/><ellipse cx="537.2" cy="605.0" rx="3.1" ry="3.0" transform="rotate(51 537.2 605.0)" fill="#1c1c1c"/><ellipse cx="427.1" cy="621.0" rx="3.7" ry="3.5" transform="rotate(110 427.1 621.0)" fill="#202020"/><ellipse cx="345.8" cy="529.0" rx="2.8" ry="2.9" transform="rotate(154 345.8 529.0)" fill="#2e2e2e"/><ellipse cx="620.6" cy="487.8" rx="2.9" ry="2.7" transform="rotate(58 620.6 487.8)" fill="#282828"/><ellipse cx="615.0" cy="580.0" rx="3.7" ry="4.0" transform="rotate(102 615.0 580.0)" fill="#1c1c1c"/><ellipse cx="459.4" cy="420.1" rx="3.3" ry="2.8" transform="rotate(132 459.4 420.1)" fill="#202020"/><ellipse cx="402.7" cy="315.5" rx="4.3" ry="3.7" transform="rotate(125 402.7 315.5)" fill="#2e2e2e"/><ellipse cx="692.9" cy="479.0" rx="3.3" ry="2.6" transform="rotate(122 692.9 479.0)" fill="#202020"/><ellipse cx="540.6" cy="462.3" rx="4.2" ry="4.1" transform="rotate(85 540.6 462.3)" fill="#2e2e2e"/><ellipse cx="390.5" cy="366.8" rx="3.0" ry="3.1" transform="rotate(87 390.5 366.8)" fill="#242424"/><ellipse cx="277.9" cy="441.2" rx="2.8" ry="3.0" transform="rotate(160 277.9 441.2)" fill="#242424"/><ellipse cx="475.5" cy="553.9" rx="2.9" ry="3.1" transform="rotate(5 475.5 553.9)" fill="#242424"/><ellipse cx="465.7" cy="593.1" rx="4.7" ry="4.7" transform="rotate(131 465.7 593.1)" fill="#1c1c1c"/><ellipse cx="576.7" cy="407.0" rx="2.7" ry="3.0" transform="rotate(41 576.7 407.0)" fill="#1c1c1c"/><ellipse cx="554.3" cy="641.9" rx="3.9" ry="3.5" transform="rotate(159 554.3 641.9)" fill="#202020"/><ellipse cx="650.2" cy="430.6" rx="2.9" ry="3.0" transform="rotate(135 650.2 430.6)" fill="#1c1c1c"/><ellipse cx="325.4" cy="321.1" rx="3.2" ry="3.0" transform="rotate(62 325.4 321.1)" fill="#282828"/><ellipse cx="646.7" cy="635.2" rx="5.5" ry="4.8" transform="rotate(172 646.7 635.2)" fill="#1c1c1c"/><ellipse cx="622.2" cy="566.9" rx="3.7" ry="4.0" transform="rotate(21 622.2 566.9)" fill="#202020"/><ellipse cx="478.3" cy="414.0" rx="2.9" ry="2.9" transform="rotate(125 478.3 414.0)" fill="#1c1c1c"/><ellipse cx="245.3" cy="531.3" rx="3.1" ry="2.9" transform="rotate(88 245.3 531.3)" fill="#242424"/><ellipse cx="380.1" cy="408.8" rx="4.2" ry="3.7" transform="rotate(23 380.1 408.8)" fill="#202020"/><ellipse cx="548.9" cy="530.1" rx="3.1" ry="2.7" transform="rotate(46 548.9 530.1)" fill="#1c1c1c"/><ellipse cx="560.8" cy="609.7" rx="2.8" ry="3.1" transform="rotate(58 560.8 609.7)" fill="#282828"/><ellipse cx="430.7" cy="406.0" rx="3.0" ry="2.9" transform="rotate(126 430.7 406.0)" fill="#242424"/><ellipse cx="589.2" cy="426.4" rx="3.0" ry="2.7" transform="rotate(35 589.2 426.4)" fill="#2e2e2e"/><ellipse cx="336.4" cy="325.8" rx="3.0" ry="2.7" transform="rotate(167 336.4 325.8)" fill="#242424"/><ellipse cx="265.4" cy="435.9" rx="6.5" ry="5.4" transform="rotate(53 265.4 435.9)" fill="#202020"/><ellipse cx="351.1" cy="551.8" rx="6.1" ry="5.6" transform="rotate(79 351.1 551.8)" fill="#282828"/><ellipse cx="567.8" cy="622.9" rx="3.3" ry="2.6" transform="rotate(163 567.8 622.9)" fill="#1c1c1c"/><ellipse cx="447.2" cy="352.1" rx="4.1" ry="3.8" transform="rotate(106 447.2 352.1)" fill="#1c1c1c"/><ellipse cx="281.3" cy="541.3" rx="3.8" ry="4.1" transform="rotate(160 281.3 541.3)" fill="#1c1c1c"/><ellipse cx="418.6" cy="706.8" rx="3.2" ry="3.0" transform="rotate(140 418.6 706.8)" fill="#202020"/><ellipse cx="632.3" cy="514.7" rx="4.9" ry="4.4" transform="rotate(121 632.3 514.7)" fill="#282828"/><ellipse cx="667.3" cy="584.0" rx="3.8" ry="3.7" transform="rotate(69 667.3 584.0)" fill="#202020"/><ellipse cx="492.6" cy="481.1" rx="3.8" ry="3.5" transform="rotate(34 492.6 481.1)" fill="#1c1c1c"/><ellipse cx="411.0" cy="598.8" rx="3.9" ry="3.8" transform="rotate(115 411.0 598.8)" fill="#2e2e2e"/><ellipse cx="511.3" cy="595.1" rx="3.1" ry="2.7" transform="rotate(127 511.3 595.1)" fill="#242424"/><ellipse cx="492.1" cy="584.4" rx="4.8" ry="5.0" transform="rotate(97 492.1 584.4)" fill="#202020"/><ellipse cx="713.9" cy="574.7" rx="2.7" ry="2.7" transform="rotate(41 713.9 574.7)" fill="#1c1c1c"/><ellipse cx="666.5" cy="604.8" rx="4.2" ry="3.5" transform="rotate(49 666.5 604.8)" fill="#282828"/><ellipse cx="708.8" cy="564.9" rx="3.3" ry="3.1" transform="rotate(118 708.8 564.9)" fill="#282828"/><ellipse cx="537.6" cy="455.3" rx="3.7" ry="4.0" transform="rotate(75 537.6 455.3)" fill="#202020"/><ellipse cx="332.6" cy="339.5" rx="3.0" ry="2.8" transform="rotate(125 332.6 339.5)" fill="#282828"/><ellipse cx="407.0" cy="693.9" rx="3.2" ry="3.1" transform="rotate(103 407.0 693.9)" fill="#1c1c1c"/><ellipse cx="287.6" cy="498.3" rx="6.3" ry="5.8" transform="rotate(127 287.6 498.3)" fill="#1c1c1c"/><ellipse cx="665.2" cy="442.7" rx="3.2" ry="2.8" transform="rotate(131 665.2 442.7)" fill="#202020"/><ellipse cx="292.8" cy="530.6" rx="3.1" ry="2.7" transform="rotate(154 292.8 530.6)" fill="#282828"/><ellipse cx="426.2" cy="546.0" rx="2.8" ry="2.9" transform="rotate(141 426.2 546.0)" fill="#282828"/><ellipse cx="604.0" cy="443.0" rx="4.0" ry="3.8" transform="rotate(149 604.0 443.0)" fill="#202020"/><ellipse cx="623.3" cy="620.7" rx="3.2" ry="3.1" transform="rotate(135 623.3 620.7)" fill="#202020"/><ellipse cx="737.2" cy="551.5" rx="4.2" ry="3.9" transform="rotate(162 737.2 551.5)" fill="#242424"/><ellipse cx="280.1" cy="523.4" rx="2.7" ry="3.0" transform="rotate(118 280.1 523.4)" fill="#2e2e2e"/><ellipse cx="592.8" cy="443.0" rx="3.7" ry="3.6" transform="rotate(165 592.8 443.0)" fill="#202020"/><ellipse cx="259.5" cy="595.3" rx="3.0" ry="3.1" transform="rotate(163 259.5 595.3)" fill="#1c1c1c"/><ellipse cx="236.8" cy="589.1" rx="2.8" ry="3.1" transform="rotate(174 236.8 589.1)" fill="#282828"/><ellipse cx="606.5" cy="483.1" rx="2.9" ry="2.6" transform="rotate(60 606.5 483.1)" fill="#1c1c1c"/><ellipse cx="376.6" cy="516.9" rx="5.3" ry="4.3" transform="rotate(115 376.6 516.9)" fill="#202020"/><ellipse cx="367.0" cy="589.9" rx="5.0" ry="4.3" transform="rotate(80 367.0 589.9)" fill="#202020"/><ellipse cx="354.1" cy="379.3" rx="3.2" ry="3.0" transform="rotate(134 354.1 379.3)" fill="#282828"/><ellipse cx="510.1" cy="668.7" rx="3.1" ry="3.1" transform="rotate(52 510.1 668.7)" fill="#2e2e2e"/><ellipse cx="292.5" cy="522.9" rx="3.3" ry="2.6" transform="rotate(70 292.5 522.9)" fill="#282828"/><ellipse cx="459.2" cy="487.6" rx="4.1" ry="3.5" transform="rotate(20 459.2 487.6)" fill="#1c1c1c"/><ellipse cx="405.8" cy="348.1" rx="3.1" ry="2.7" transform="rotate(140 405.8 348.1)" fill="#2e2e2e"/><ellipse cx="578.0" cy="617.4" rx="4.6" ry="4.9" transform="rotate(153 578.0 617.4)" fill="#1c1c1c"/><ellipse cx="334.6" cy="552.0" rx="4.0" ry="4.2" transform="rotate(43 334.6 552.0)" fill="#242424"/><ellipse cx="501.0" cy="469.1" rx="5.1" ry="4.5" transform="rotate(77 501.0 469.1)" fill="#2e2e2e"/><ellipse cx="440.4" cy="610.8" rx="4.0" ry="4.1" transform="rotate(111 440.4 610.8)" fill="#202020"/><ellipse cx="694.1" cy="581.6" rx="3.3" ry="2.7" transform="rotate(9 694.1 581.6)" fill="#282828"/><ellipse cx="521.2" cy="376.0" rx="3.1" ry="2.7" transform="rotate(57 521.2 376.0)" fill="#242424"/><ellipse cx="499.2" cy="381.9" rx="2.7" ry="2.9" transform="rotate(41 499.2 381.9)" fill="#202020"/><ellipse cx="422.3" cy="366.8" rx="3.1" ry="2.7" transform="rotate(130 422.3 366.8)" fill="#2e2e2e"/><ellipse cx="507.9" cy="482.1" rx="3.0" ry="3.0" transform="rotate(26 507.9 482.1)" fill="#242424"/><ellipse cx="453.0" cy="534.8" rx="6.2" ry="5.1" transform="rotate(22 453.0 534.8)" fill="#1c1c1c"/><ellipse cx="288.0" cy="543.9" rx="3.0" ry="3.1" transform="rotate(37 288.0 543.9)" fill="#2e2e2e"/><ellipse cx="429.0" cy="429.6" rx="2.7" ry="3.1" transform="rotate(8 429.0 429.6)" fill="#202020"/><ellipse cx="511.6" cy="587.0" rx="3.0" ry="2.7" transform="rotate(77 511.6 587.0)" fill="#242424"/><ellipse cx="521.3" cy="418.3" rx="3.2" ry="3.1" transform="rotate(42 521.3 418.3)" fill="#242424"/><ellipse cx="399.2" cy="366.0" rx="3.1" ry="3.0" transform="rotate(60 399.2 366.0)" fill="#1c1c1c"/><ellipse cx="299.0" cy="619.8" rx="2.9" ry="2.6" transform="rotate(110 299.0 619.8)" fill="#2e2e2e"/><ellipse cx="359.3" cy="669.8" rx="3.9" ry="3.9" transform="rotate(122 359.3 669.8)" fill="#2e2e2e"/><ellipse cx="611.8" cy="539.5" rx="4.8" ry="5.0" transform="rotate(130 611.8 539.5)" fill="#202020"/><ellipse cx="417.7" cy="504.7" rx="6.2" ry="5.3" transform="rotate(120 417.7 504.7)" fill="#202020"/><ellipse cx="437.0" cy="355.5" rx="3.1" ry="3.0" transform="rotate(30 437.0 355.5)" fill="#202020"/><ellipse cx="519.9" cy="591.0" rx="5.3" ry="4.4" transform="rotate(13 519.9 591.0)" fill="#242424"/><ellipse cx="394.5" cy="471.8" rx="3.1" ry="2.9" transform="rotate(166 394.5 471.8)" fill="#242424"/><ellipse cx="561.8" cy="658.6" rx="4.4" ry="3.9" transform="rotate(19 561.8 658.6)" fill="#202020"/><ellipse cx="501.5" cy="369.3" rx="3.3" ry="2.9" transform="rotate(160 501.5 369.3)" fill="#1c1c1c"/><ellipse cx="301.9" cy="419.3" rx="4.2" ry="3.9" transform="rotate(0 301.9 419.3)" fill="#282828"/><ellipse cx="412.7" cy="491.0" rx="4.5" ry="4.5" transform="rotate(3 412.7 491.0)" fill="#1c1c1c"/><ellipse cx="415.8" cy="369.8" rx="3.8" ry="3.6" transform="rotate(162 415.8 369.8)" fill="#2e2e2e"/><ellipse cx="672.2" cy="451.4" rx="3.1" ry="2.6" transform="rotate(97 672.2 451.4)" fill="#242424"/><ellipse cx="430.8" cy="420.5" rx="2.9" ry="2.7" transform="rotate(160 430.8 420.5)" fill="#1c1c1c"/><ellipse cx="610.3" cy="550.1" rx="3.0" ry="3.0" transform="rotate(73 610.3 550.1)" fill="#202020"/><ellipse cx="654.3" cy="585.0" rx="4.1" ry="3.7" transform="rotate(56 654.3 585.0)" fill="#1c1c1c"/><ellipse cx="323.2" cy="348.5" rx="4.3" ry="3.5" transform="rotate(40 323.2 348.5)" fill="#242424"/><ellipse cx="558.5" cy="668.4" rx="3.2" ry="2.9" transform="rotate(27 558.5 668.4)" fill="#242424"/><ellipse cx="385.9" cy="583.7" rx="3.2" ry="2.8" transform="rotate(102 385.9 583.7)" fill="#2e2e2e"/><ellipse cx="442.5" cy="456.9" rx="3.1" ry="2.8" transform="rotate(2 442.5 456.9)" fill="#2e2e2e"/><ellipse cx="263.5" cy="460.1" rx="2.9" ry="3.0" transform="rotate(147 263.5 460.1)" fill="#1c1c1c"/><ellipse cx="736.4" cy="526.4" rx="3.3" ry="2.9" transform="rotate(98 736.4 526.4)" fill="#242424"/><ellipse cx="583.0" cy="473.0" rx="2.9" ry="2.9" transform="rotate(23 583.0 473.0)" fill="#1c1c1c"/><ellipse cx="426.7" cy="342.8" rx="4.9" ry="5.1" transform="rotate(5 426.7 342.8)" fill="#1c1c1c"/><ellipse cx="420.9" cy="549.0" rx="2.7" ry="2.7" transform="rotate(140 420.9 549.0)" fill="#242424"/><ellipse cx="558.5" cy="617.6" rx="3.8" ry="4.1" transform="rotate(171 558.5 617.6)" fill="#282828"/><ellipse cx="386.0" cy="697.9" rx="2.9" ry="3.0" transform="rotate(1 386.0 697.9)" fill="#202020"/><ellipse cx="278.8" cy="605.0" rx="4.1" ry="3.5" transform="rotate(75 278.8 605.0)" fill="#242424"/><ellipse cx="344.4" cy="464.3" rx="2.8" ry="3.0" transform="rotate(50 344.4 464.3)" fill="#2e2e2e"/><ellipse cx="247.4" cy="551.6" rx="3.7" ry="3.8" transform="rotate(152 247.4 551.6)" fill="#242424"/><ellipse cx="484.1" cy="622.5" rx="4.4" ry="3.5" transform="rotate(180 484.1 622.5)" fill="#1c1c1c"/><ellipse cx="385.7" cy="607.9" rx="3.1" ry="3.1" transform="rotate(61 385.7 607.9)" fill="#1c1c1c"/><ellipse cx="440.5" cy="349.2" rx="3.0" ry="3.1" transform="rotate(59 440.5 349.2)" fill="#282828"/><ellipse cx="692.1" cy="587.4" rx="3.0" ry="2.7" transform="rotate(45 692.1 587.4)" fill="#1c1c1c"/><ellipse cx="720.2" cy="512.4" rx="3.3" ry="3.1" transform="rotate(140 720.2 512.4)" fill="#242424"/><ellipse cx="285.2" cy="415.2" rx="2.9" ry="3.0" transform="rotate(80 285.2 415.2)" fill="#242424"/><ellipse cx="533.4" cy="488.2" rx="3.2" ry="3.1" transform="rotate(103 533.4 488.2)" fill="#242424"/><ellipse cx="300.1" cy="383.5" rx="3.0" ry="3.1" transform="rotate(8 300.1 383.5)" fill="#202020"/><ellipse cx="576.8" cy="468.9" rx="2.9" ry="3.1" transform="rotate(151 576.8 468.9)" fill="#282828"/><ellipse cx="634.7" cy="599.6" rx="2.8" ry="2.7" transform="rotate(48 634.7 599.6)" fill="#2e2e2e"/><ellipse cx="542.1" cy="563.4" rx="4.2" ry="3.5" transform="rotate(148 542.1 563.4)" fill="#202020"/><ellipse cx="559.6" cy="467.9" rx="2.8" ry="2.6" transform="rotate(9 559.6 467.9)" fill="#2e2e2e"/><ellipse cx="500.9" cy="451.1" rx="3.0" ry="3.1" transform="rotate(89 500.9 451.1)" fill="#242424"/><ellipse cx="471.4" cy="428.1" rx="6.0" ry="5.5" transform="rotate(87 471.4 428.1)" fill="#242424"/><ellipse cx="629.8" cy="543.9" rx="3.1" ry="2.7" transform="rotate(107 629.8 543.9)" fill="#242424"/><ellipse cx="415.1" cy="407.5" rx="4.1" ry="4.1" transform="rotate(143 415.1 407.5)" fill="#2e2e2e"/><ellipse cx="510.3" cy="564.4" rx="3.0" ry="2.7" transform="rotate(94 510.3 564.4)" fill="#1c1c1c"/><ellipse cx="430.0" cy="505.0" rx="4.9" ry="4.5" transform="rotate(80 430.0 505.0)" fill="#2e2e2e"/><ellipse cx="469.0" cy="524.6" rx="2.9" ry="2.7" transform="rotate(17 469.0 524.6)" fill="#1c1c1c"/><ellipse cx="339.6" cy="456.4" rx="3.1" ry="2.8" transform="rotate(133 339.6 456.4)" fill="#282828"/><ellipse cx="486.7" cy="485.1" rx="3.2" ry="3.1" transform="rotate(87 486.7 485.1)" fill="#242424"/><ellipse cx="629.5" cy="566.6" rx="2.9" ry="2.9" transform="rotate(134 629.5 566.6)" fill="#202020"/><ellipse cx="605.8" cy="596.7" rx="3.6" ry="3.8" transform="rotate(84 605.8 596.7)" fill="#1c1c1c"/><ellipse cx="516.6" cy="487.0" rx="5.1" ry="4.3" transform="rotate(152 516.6 487.0)" fill="#282828"/><ellipse cx="342.5" cy="320.4" rx="3.9" ry="3.4" transform="rotate(123 342.5 320.4)" fill="#282828"/><ellipse cx="633.4" cy="562.7" rx="3.2" ry="2.8" transform="rotate(81 633.4 562.7)" fill="#1c1c1c"/><ellipse cx="422.4" cy="645.2" rx="5.3" ry="4.6" transform="rotate(34 422.4 645.2)" fill="#242424"/><ellipse cx="403.9" cy="462.2" rx="3.0" ry="3.1" transform="rotate(137 403.9 462.2)" fill="#242424"/><ellipse cx="359.0" cy="360.8" rx="2.9" ry="3.0" transform="rotate(134 359.0 360.8)" fill="#282828"/><ellipse cx="313.9" cy="572.3" rx="3.3" ry="3.1" transform="rotate(106 313.9 572.3)" fill="#242424"/><ellipse cx="385.5" cy="705.2" rx="5.0" ry="4.8" transform="rotate(6 385.5 705.2)" fill="#242424"/><ellipse cx="291.3" cy="420.6" rx="2.8" ry="2.8" transform="rotate(71 291.3 420.6)" fill="#242424"/><ellipse cx="466.8" cy="489.3" rx="4.1" ry="3.9" transform="rotate(87 466.8 489.3)" fill="#2e2e2e"/><ellipse cx="354.5" cy="624.1" rx="2.8" ry="2.9" transform="rotate(68 354.5 624.1)" fill="#282828"/><ellipse cx="428.3" cy="452.5" rx="4.9" ry="4.3" transform="rotate(50 428.3 452.5)" fill="#1c1c1c"/><ellipse cx="360.6" cy="529.0" rx="3.0" ry="3.0" transform="rotate(70 360.6 529.0)" fill="#1c1c1c"/><ellipse cx="520.0" cy="629.7" rx="3.0" ry="3.1" transform="rotate(74 520.0 629.7)" fill="#2e2e2e"/><ellipse cx="225.5" cy="565.6" rx="4.6" ry="4.7" transform="rotate(84 225.5 565.6)" fill="#2e2e2e"/><ellipse cx="608.1" cy="638.6" rx="3.1" ry="2.6" transform="rotate(111 608.1 638.6)" fill="#1c1c1c"/><ellipse cx="558.9" cy="448.2" rx="4.3" ry="3.5" transform="rotate(108 558.9 448.2)" fill="#202020"/><ellipse cx="307.1" cy="445.6" rx="3.1" ry="2.6" transform="rotate(47 307.1 445.6)" fill="#242424"/><ellipse cx="423.3" cy="602.4" rx="4.8" ry="5.2" transform="rotate(94 423.3 602.4)" fill="#1c1c1c"/><ellipse cx="503.1" cy="587.3" rx="3.2" ry="2.8" transform="rotate(75 503.1 587.3)" fill="#1c1c1c"/><ellipse cx="529.4" cy="441.3" rx="3.2" ry="3.1" transform="rotate(165 529.4 441.3)" fill="#1c1c1c"/><ellipse cx="396.0" cy="662.7" rx="5.0" ry="5.1" transform="rotate(150 396.0 662.7)" fill="#242424"/><ellipse cx="283.8" cy="549.8" rx="2.9" ry="2.8" transform="rotate(10 283.8 549.8)" fill="#1c1c1c"/><ellipse cx="257.3" cy="587.0" rx="2.9" ry="3.0" transform="rotate(43 257.3 587.0)" fill="#202020"/><ellipse cx="508.1" cy="368.4" rx="3.1" ry="2.6" transform="rotate(42 508.1 368.4)" fill="#242424"/><ellipse cx="444.0" cy="664.4" rx="2.9" ry="2.9" transform="rotate(48 444.0 664.4)" fill="#242424"/><ellipse cx="299.8" cy="435.8" rx="3.2" ry="3.1" transform="rotate(99 299.8 435.8)" fill="#202020"/><ellipse cx="414.1" cy="641.6" rx="4.0" ry="4.0" transform="rotate(111 414.1 641.6)" fill="#242424"/><ellipse cx="696.8" cy="512.1" rx="3.2" ry="3.1" transform="rotate(146 696.8 512.1)" fill="#282828"/><ellipse cx="442.9" cy="343.0" rx="4.1" ry="4.1" transform="rotate(34 442.9 343.0)" fill="#202020"/><ellipse cx="419.3" cy="347.2" rx="2.8" ry="3.0" transform="rotate(163 419.3 347.2)" fill="#202020"/><ellipse cx="299.9" cy="658.4" rx="3.1" ry="2.6" transform="rotate(166 299.9 658.4)" fill="#242424"/><ellipse cx="301.2" cy="578.8" rx="3.9" ry="4.1" transform="rotate(68 301.2 578.8)" fill="#202020"/><ellipse cx="662.0" cy="557.7" rx="3.3" ry="2.9" transform="rotate(16 662.0 557.7)" fill="#2e2e2e"/><ellipse cx="345.2" cy="620.4" rx="3.8" ry="4.1" transform="rotate(101 345.2 620.4)" fill="#242424"/><ellipse cx="670.3" cy="458.2" rx="4.3" ry="3.7" transform="rotate(97 670.3 458.2)" fill="#2e2e2e"/><ellipse cx="334.1" cy="332.6" rx="4.2" ry="3.7" transform="rotate(2 334.1 332.6)" fill="#1c1c1c"/><ellipse cx="352.1" cy="638.3" rx="3.1" ry="2.9" transform="rotate(59 352.1 638.3)" fill="#202020"/><ellipse cx="596.6" cy="456.2" rx="4.2" ry="3.6" transform="rotate(18 596.6 456.2)" fill="#282828"/><ellipse cx="321.4" cy="669.0" rx="3.1" ry="2.9" transform="rotate(101 321.4 669.0)" fill="#1c1c1c"/><ellipse cx="555.1" cy="651.7" rx="2.8" ry="2.8" transform="rotate(57 555.1 651.7)" fill="#242424"/><ellipse cx="586.2" cy="600.2" rx="2.8" ry="2.6" transform="rotate(4 586.2 600.2)" fill="#1c1c1c"/><ellipse cx="560.9" cy="677.5" rx="3.2" ry="3.1" transform="rotate(78 560.9 677.5)" fill="#242424"/><ellipse cx="671.6" cy="444.8" rx="3.2" ry="2.7" transform="rotate(5 671.6 444.8)" fill="#202020"/><ellipse cx="271.9" cy="499.9" rx="3.1" ry="2.8" transform="rotate(135 271.9 499.9)" fill="#282828"/><ellipse cx="385.0" cy="527.8" rx="3.2" ry="2.7" transform="rotate(47 385.0 527.8)" fill="#2e2e2e"/><ellipse cx="486.3" cy="694.5" rx="4.0" ry="3.8" transform="rotate(61 486.3 694.5)" fill="#1c1c1c"/><ellipse cx="385.3" cy="402.2" rx="3.1" ry="2.9" transform="rotate(81 385.3 402.2)" fill="#2e2e2e"/><ellipse cx="565.4" cy="534.3" rx="3.0" ry="2.8" transform="rotate(177 565.4 534.3)" fill="#202020"/><ellipse cx="502.5" cy="361.0" rx="3.0" ry="2.9" transform="rotate(58 502.5 361.0)" fill="#2e2e2e"/><ellipse cx="376.8" cy="541.5" rx="2.9" ry="2.6" transform="rotate(48 376.8 541.5)" fill="#282828"/><ellipse cx="540.5" cy="585.4" rx="2.9" ry="3.1" transform="rotate(33 540.5 585.4)" fill="#282828"/><ellipse cx="628.8" cy="485.3" rx="3.2" ry="3.1" transform="rotate(4 628.8 485.3)" fill="#282828"/><ellipse cx="318.3" cy="368.8" rx="3.1" ry="2.9" transform="rotate(34 318.3 368.8)" fill="#1c1c1c"/><ellipse cx="584.4" cy="664.1" rx="3.3" ry="2.7" transform="rotate(157 584.4 664.1)" fill="#242424"/><ellipse cx="612.9" cy="410.2" rx="4.3" ry="3.8" transform="rotate(89 612.9 410.2)" fill="#2e2e2e"/><ellipse cx="338.6" cy="534.6" rx="3.8" ry="3.5" transform="rotate(171 338.6 534.6)" fill="#242424"/><ellipse cx="360.5" cy="560.1" rx="2.7" ry="3.1" transform="rotate(175 360.5 560.1)" fill="#2e2e2e"/><ellipse cx="454.7" cy="481.7" rx="2.7" ry="2.6" transform="rotate(164 454.7 481.7)" fill="#2e2e2e"/><ellipse cx="434.6" cy="646.4" rx="5.5" ry="4.6" transform="rotate(81 434.6 646.4)" fill="#202020"/><ellipse cx="487.0" cy="653.3" rx="3.1" ry="3.1" transform="rotate(79 487.0 653.3)" fill="#1c1c1c"/><ellipse cx="447.4" cy="415.1" rx="4.2" ry="3.8" transform="rotate(166 447.4 415.1)" fill="#202020"/><ellipse cx="674.2" cy="543.3" rx="3.0" ry="3.1" transform="rotate(172 674.2 543.3)" fill="#1c1c1c"/><ellipse cx="326.4" cy="389.7" rx="3.3" ry="2.6" transform="rotate(168 326.4 389.7)" fill="#282828"/><ellipse cx="406.1" cy="564.4" rx="4.3" ry="3.5" transform="rotate(142 406.1 564.4)" fill="#202020"/><ellipse cx="384.4" cy="616.4" rx="3.3" ry="2.7" transform="rotate(29 384.4 616.4)" fill="#2e2e2e"/><ellipse cx="461.2" cy="668.4" rx="5.0" ry="4.4" transform="rotate(105 461.2 668.4)" fill="#1c1c1c"/><ellipse cx="341.4" cy="477.7" rx="3.0" ry="2.8" transform="rotate(152 341.4 477.7)" fill="#282828"/><ellipse cx="526.3" cy="412.5" rx="3.0" ry="2.7" transform="rotate(119 526.3 412.5)" fill="#282828"/><ellipse cx="554.3" cy="413.9" rx="3.1" ry="3.1" transform="rotate(159 554.3 413.9)" fill="#2e2e2e"/><ellipse cx="692.0" cy="486.2" rx="3.6" ry="3.6" transform="rotate(146 692.0 486.2)" fill="#282828"/><ellipse cx="598.6" cy="449.9" rx="2.9" ry="2.9" transform="rotate(83 598.6 449.9)" fill="#1c1c1c"/><ellipse cx="590.5" cy="586.9" rx="3.3" ry="2.7" transform="rotate(89 590.5 586.9)" fill="#282828"/><ellipse cx="372.2" cy="535.2" rx="3.0" ry="2.9" transform="rotate(85 372.2 535.2)" fill="#202020"/><ellipse cx="541.8" cy="623.3" rx="4.2" ry="3.4" transform="rotate(34 541.8 623.3)" fill="#2e2e2e"/><ellipse cx="613.6" cy="606.0" rx="2.7" ry="2.7" transform="rotate(52 613.6 606.0)" fill="#282828"/><ellipse cx="603.9" cy="406.5" rx="3.0" ry="2.7" transform="rotate(17 603.9 406.5)" fill="#2e2e2e"/><ellipse cx="430.2" cy="365.9" rx="4.3" ry="4.0" transform="rotate(60 430.2 365.9)" fill="#2e2e2e"/><ellipse cx="473.0" cy="601.2" rx="5.4" ry="4.3" transform="rotate(179 473.0 601.2)" fill="#242424"/><ellipse cx="434.7" cy="480.6" rx="2.9" ry="2.6" transform="rotate(151 434.7 480.6)" fill="#202020"/><ellipse cx="410.4" cy="611.5" rx="2.9" ry="2.8" transform="rotate(101 410.4 611.5)" fill="#282828"/><ellipse cx="599.4" cy="662.0" rx="3.6" ry="3.6" transform="rotate(100 599.4 662.0)" fill="#242424"/><ellipse cx="290.8" cy="442.6" rx="3.3" ry="3.0" transform="rotate(161 290.8 442.6)" fill="#2e2e2e"/><ellipse cx="575.7" cy="484.9" rx="2.8" ry="2.7" transform="rotate(109 575.7 484.9)" fill="#1c1c1c"/><ellipse cx="392.5" cy="569.1" rx="3.8" ry="3.8" transform="rotate(14 392.5 569.1)" fill="#2e2e2e"/><ellipse cx="328.0" cy="329.2" rx="3.1" ry="2.6" transform="rotate(57 328.0 329.2)" fill="#242424"/><ellipse cx="605.6" cy="566.1" rx="3.9" ry="3.4" transform="rotate(93 605.6 566.1)" fill="#2e2e2e"/><ellipse cx="252.2" cy="532.6" rx="3.7" ry="3.8" transform="rotate(83 252.2 532.6)" fill="#1c1c1c"/><ellipse cx="379.9" cy="657.0" rx="3.2" ry="2.7" transform="rotate(77 379.9 657.0)" fill="#1c1c1c"/><ellipse cx="510.1" cy="501.6" rx="4.8" ry="4.7" transform="rotate(93 510.1 501.6)" fill="#1c1c1c"/><ellipse cx="639.5" cy="521.1" rx="4.1" ry="3.4" transform="rotate(118 639.5 521.1)" fill="#282828"/><ellipse cx="324.3" cy="494.2" rx="3.7" ry="3.6" transform="rotate(1 324.3 494.2)" fill="#2e2e2e"/><ellipse cx="344.1" cy="421.7" rx="2.8" ry="2.7" transform="rotate(47 344.1 421.7)" fill="#2e2e2e"/><ellipse cx="362.6" cy="660.6" rx="3.2" ry="2.9" transform="rotate(147 362.6 660.6)" fill="#282828"/><ellipse cx="538.0" cy="701.9" rx="3.2" ry="2.6" transform="rotate(4 538.0 701.9)" fill="#242424"/><ellipse cx="310.3" cy="607.0" rx="2.8" ry="2.7" transform="rotate(61 310.3 607.0)" fill="#202020"/><ellipse cx="662.4" cy="517.4" rx="2.7" ry="3.0" transform="rotate(105 662.4 517.4)" fill="#282828"/><ellipse cx="433.7" cy="523.5" rx="2.8" ry="3.1" transform="rotate(29 433.7 523.5)" fill="#1c1c1c"/><ellipse cx="439.8" cy="637.3" rx="3.2" ry="2.7" transform="rotate(92 439.8 637.3)" fill="#202020"/><ellipse cx="356.0" cy="368.2" rx="3.9" ry="4.2" transform="rotate(171 356.0 368.2)" fill="#202020"/><ellipse cx="494.1" cy="498.5" rx="3.0" ry="2.7" transform="rotate(174 494.1 498.5)" fill="#2e2e2e"/><ellipse cx="516.4" cy="582.2" rx="4.2" ry="3.5" transform="rotate(131 516.4 582.2)" fill="#242424"/><ellipse cx="546.4" cy="467.7" rx="2.9" ry="3.1" transform="rotate(127 546.4 467.7)" fill="#202020"/><ellipse cx="461.9" cy="569.6" rx="3.1" ry="2.6" transform="rotate(123 461.9 569.6)" fill="#202020"/><ellipse cx="433.5" cy="313.3" rx="3.1" ry="3.0" transform="rotate(59 433.5 313.3)" fill="#2e2e2e"/><ellipse cx="277.6" cy="411.8" rx="2.8" ry="2.7" transform="rotate(115 277.6 411.8)" fill="#242424"/><ellipse cx="400.7" cy="410.5" rx="3.1" ry="2.8" transform="rotate(90 400.7 410.5)" fill="#1c1c1c"/><ellipse cx="684.8" cy="526.6" rx="3.9" ry="4.2" transform="rotate(146 684.8 526.6)" fill="#282828"/><ellipse cx="415.3" cy="584.1" rx="4.3" ry="3.8" transform="rotate(76 415.3 584.1)" fill="#242424"/><ellipse cx="351.1" cy="691.8" rx="3.1" ry="2.9" transform="rotate(78 351.1 691.8)" fill="#2e2e2e"/><ellipse cx="587.0" cy="447.3" rx="2.8" ry="3.1" transform="rotate(101 587.0 447.3)" fill="#202020"/><ellipse cx="658.1" cy="483.0" rx="3.0" ry="2.9" transform="rotate(22 658.1 483.0)" fill="#282828"/><ellipse cx="361.9" cy="576.2" rx="4.1" ry="4.2" transform="rotate(118 361.9 576.2)" fill="#2e2e2e"/><ellipse cx="596.3" cy="578.8" rx="3.8" ry="3.9" transform="rotate(117 596.3 578.8)" fill="#2e2e2e"/><ellipse cx="408.3" cy="686.4" rx="2.9" ry="3.0" transform="rotate(30 408.3 686.4)" fill="#2e2e2e"/><ellipse cx="486.1" cy="366.6" rx="3.8" ry="3.5" transform="rotate(134 486.1 366.6)" fill="#282828"/><ellipse cx="235.6" cy="527.5" rx="2.8" ry="2.7" transform="rotate(26 235.6 527.5)" fill="#242424"/><ellipse cx="351.2" cy="629.5" rx="4.3" ry="4.1" transform="rotate(143 351.2 629.5)" fill="#202020"/><ellipse cx="239.3" cy="568.4" rx="2.9" ry="2.7" transform="rotate(140 239.3 568.4)" fill="#1c1c1c"/><ellipse cx="507.6" cy="701.1" rx="3.8" ry="3.8" transform="rotate(121 507.6 701.1)" fill="#2e2e2e"/><ellipse cx="414.3" cy="350.1" rx="3.0" ry="3.0" transform="rotate(140 414.3 350.1)" fill="#1c1c1c"/><ellipse cx="241.5" cy="510.9" rx="2.9" ry="2.6" transform="rotate(160 241.5 510.9)" fill="#1c1c1c"/><ellipse cx="495.2" cy="338.8" rx="2.9" ry="2.7" transform="rotate(22 495.2 338.8)" fill="#282828"/><ellipse cx="636.3" cy="416.4" rx="2.7" ry="2.9" transform="rotate(54 636.3 416.4)" fill="#202020"/><ellipse cx="314.7" cy="506.2" rx="3.1" ry="2.6" transform="rotate(136 314.7 506.2)" fill="#2e2e2e"/><ellipse cx="316.8" cy="489.9" rx="3.1" ry="3.1" transform="rotate(89 316.8 489.9)" fill="#242424"/><ellipse cx="538.2" cy="569.6" rx="2.9" ry="2.6" transform="rotate(124 538.2 569.6)" fill="#242424"/><ellipse cx="452.4" cy="325.1" rx="3.2" ry="2.6" transform="rotate(150 452.4 325.1)" fill="#202020"/><ellipse cx="299.4" cy="346.2" rx="3.2" ry="2.7" transform="rotate(104 299.4 346.2)" fill="#282828"/><ellipse cx="360.4" cy="517.1" rx="3.1" ry="3.0" transform="rotate(168 360.4 517.1)" fill="#242424"/><ellipse cx="534.7" cy="655.9" rx="2.9" ry="2.6" transform="rotate(38 534.7 655.9)" fill="#202020"/><ellipse cx="622.9" cy="407.9" rx="3.1" ry="3.0" transform="rotate(56 622.9 407.9)" fill="#2e2e2e"/><ellipse cx="394.3" cy="626.3" rx="3.0" ry="2.8" transform="rotate(123 394.3 626.3)" fill="#1c1c1c"/><ellipse cx="548.1" cy="599.4" rx="3.2" ry="2.7" transform="rotate(28 548.1 599.4)" fill="#282828"/><ellipse cx="676.2" cy="602.2" rx="3.3" ry="2.8" transform="rotate(97 676.2 602.2)" fill="#1c1c1c"/><ellipse cx="547.2" cy="415.5" rx="3.2" ry="2.6" transform="rotate(123 547.2 415.5)" fill="#242424"/><ellipse cx="559.0" cy="537.8" rx="4.3" ry="3.6" transform="rotate(171 559.0 537.8)" fill="#2e2e2e"/><ellipse cx="332.3" cy="383.2" rx="4.3" ry="3.9" transform="rotate(85 332.3 383.2)" fill="#202020"/><ellipse cx="398.0" cy="508.0" rx="2.8" ry="2.6" transform="rotate(96 398.0 508.0)" fill="#1c1c1c"/><ellipse cx="254.3" cy="511.5" rx="3.0" ry="2.6" transform="rotate(177 254.3 511.5)" fill="#1c1c1c"/><ellipse cx="694.7" cy="472.1" rx="3.1" ry="2.8" transform="rotate(57 694.7 472.1)" fill="#2e2e2e"/><ellipse cx="575.4" cy="377.2" rx="3.0" ry="2.8" transform="rotate(50 575.4 377.2)" fill="#282828"/><ellipse cx="513.5" cy="534.7" rx="3.6" ry="4.1" transform="rotate(93 513.5 534.7)" fill="#242424"/><ellipse cx="443.9" cy="324.3" rx="3.1" ry="3.0" transform="rotate(17 443.9 324.3)" fill="#242424"/><ellipse cx="449.9" cy="574.5" rx="3.7" ry="3.9" transform="rotate(82 449.9 574.5)" fill="#282828"/><ellipse cx="688.6" cy="499.8" rx="3.3" ry="2.8" transform="rotate(149 688.6 499.8)" fill="#2e2e2e"/><ellipse cx="655.4" cy="465.6" rx="3.2" ry="2.9" transform="rotate(158 655.4 465.6)" fill="#1c1c1c"/><ellipse cx="552.4" cy="604.6" rx="3.0" ry="2.6" transform="rotate(142 552.4 604.6)" fill="#282828"/><ellipse cx="362.9" cy="583.0" rx="2.7" ry="2.7" transform="rotate(62 362.9 583.0)" fill="#2e2e2e"/><ellipse cx="380.6" cy="622.2" rx="3.8" ry="4.0" transform="rotate(120 380.6 622.2)" fill="#242424"/><ellipse cx="530.2" cy="417.4" rx="3.7" ry="3.9" transform="rotate(56 530.2 417.4)" fill="#282828"/><ellipse cx="370.0" cy="373.6" rx="3.9" ry="3.5" transform="rotate(109 370.0 373.6)" fill="#242424"/><ellipse cx="547.3" cy="553.0" rx="2.9" ry="2.7" transform="rotate(37 547.3 553.0)" fill="#2e2e2e"/><ellipse cx="639.0" cy="593.8" rx="3.0" ry="3.0" transform="rotate(174 639.0 593.8)" fill="#202020"/><ellipse cx="387.1" cy="466.0" rx="3.0" ry="2.9" transform="rotate(120 387.1 466.0)" fill="#202020"/><ellipse cx="542.4" cy="482.8" rx="2.7" ry="2.8" transform="rotate(120 542.4 482.8)" fill="#282828"/><ellipse cx="399.7" cy="693.5" rx="3.0" ry="2.6" transform="rotate(37 399.7 693.5)" fill="#202020"/><ellipse cx="369.2" cy="700.2" rx="4.3" ry="4.1" transform="rotate(152 369.2 700.2)" fill="#1c1c1c"/><ellipse cx="347.2" cy="380.6" rx="2.9" ry="3.1" transform="rotate(81 347.2 380.6)" fill="#202020"/><ellipse cx="382.9" cy="680.7" rx="3.1" ry="2.7" transform="rotate(167 382.9 680.7)" fill="#2e2e2e"/><ellipse cx="461.4" cy="539.9" rx="2.9" ry="2.7" transform="rotate(13 461.4 539.9)" fill="#242424"/><ellipse cx="393.5" cy="532.1" rx="3.6" ry="3.5" transform="rotate(83 393.5 532.1)" fill="#282828"/><ellipse cx="440.1" cy="578.8" rx="4.0" ry="3.5" transform="rotate(173 440.1 578.8)" fill="#242424"/><ellipse cx="359.4" cy="546.2" rx="3.1" ry="2.6" transform="rotate(70 359.4 546.2)" fill="#1c1c1c"/><ellipse cx="709.9" cy="571.2" rx="2.7" ry="2.9" transform="rotate(172 709.9 571.2)" fill="#242424"/><ellipse cx="422.2" cy="432.1" rx="3.3" ry="2.8" transform="rotate(105 422.2 432.1)" fill="#202020"/><ellipse cx="601.9" cy="654.9" rx="3.1" ry="3.0" transform="rotate(156 601.9 654.9)" fill="#1c1c1c"/><ellipse cx="377.4" cy="702.2" rx="4.0" ry="4.1" transform="rotate(139 377.4 702.2)" fill="#242424"/><ellipse cx="530.3" cy="424.5" rx="3.0" ry="2.9" transform="rotate(25 530.3 424.5)" fill="#1c1c1c"/><ellipse cx="288.2" cy="602.5" rx="4.3" ry="4.0" transform="rotate(21 288.2 602.5)" fill="#2e2e2e"/><ellipse cx="448.8" cy="687.7" rx="4.1" ry="3.9" transform="rotate(176 448.8 687.7)" fill="#282828"/><ellipse cx="511.7" cy="686.8" rx="2.8" ry="2.6" transform="rotate(24 511.7 686.8)" fill="#242424"/><ellipse cx="526.7" cy="616.9" rx="3.2" ry="3.1" transform="rotate(77 526.7 616.9)" fill="#282828"/><ellipse cx="508.1" cy="581.6" rx="2.9" ry="2.6" transform="rotate(3 508.1 581.6)" fill="#2e2e2e"/><ellipse cx="551.0" cy="510.4" rx="3.6" ry="3.8" transform="rotate(98 551.0 510.4)" fill="#282828"/><ellipse cx="358.4" cy="589.8" rx="3.8" ry="3.5" transform="rotate(50 358.4 589.8)" fill="#282828"/><ellipse cx="528.8" cy="665.0" rx="3.9" ry="4.0" transform="rotate(65 528.8 665.0)" fill="#202020"/><ellipse cx="637.1" cy="650.0" rx="3.2" ry="2.6" transform="rotate(81 637.1 650.0)" fill="#2e2e2e"/><ellipse cx="326.2" cy="554.6" rx="3.1" ry="2.8" transform="rotate(168 326.2 554.6)" fill="#1c1c1c"/><ellipse cx="377.4" cy="491.7" rx="2.8" ry="3.1" transform="rotate(38 377.4 491.7)" fill="#242424"/><ellipse cx="342.2" cy="362.3" rx="2.8" ry="2.9" transform="rotate(54 342.2 362.3)" fill="#1c1c1c"/><ellipse cx="528.9" cy="589.5" rx="3.2" ry="3.1" transform="rotate(19 528.9 589.5)" fill="#1c1c1c"/><ellipse cx="457.3" cy="329.2" rx="2.9" ry="2.8" transform="rotate(14 457.3 329.2)" fill="#2e2e2e"/><ellipse cx="487.7" cy="526.2" rx="3.0" ry="2.7" transform="rotate(28 487.7 526.2)" fill="#2e2e2e"/><ellipse cx="623.0" cy="573.2" rx="2.9" ry="2.8" transform="rotate(15 623.0 573.2)" fill="#282828"/><ellipse cx="231.2" cy="571.0" rx="3.8" ry="3.7" transform="rotate(24 231.2 571.0)" fill="#242424"/><ellipse cx="738.9" cy="539.8" rx="4.0" ry="4.1" transform="rotate(164 738.9 539.8)" fill="#202020"/><ellipse cx="680.2" cy="459.8" rx="3.1" ry="2.9" transform="rotate(8 680.2 459.8)" fill="#202020"/><ellipse cx="504.7" cy="495.4" rx="3.7" ry="3.9" transform="rotate(171 504.7 495.4)" fill="#202020"/><ellipse cx="327.9" cy="611.6" rx="3.2" ry="2.7" transform="rotate(21 327.9 611.6)" fill="#2e2e2e"/><ellipse cx="344.0" cy="441.3" rx="3.3" ry="3.0" transform="rotate(131 344.0 441.3)" fill="#282828"/><ellipse cx="274.0" cy="548.5" rx="2.8" ry="2.8" transform="rotate(19 274.0 548.5)" fill="#242424"/><ellipse cx="530.0" cy="430.3" rx="2.8" ry="2.7" transform="rotate(146 530.0 430.3)" fill="#1c1c1c"/><ellipse cx="468.1" cy="548.5" rx="3.3" ry="2.9" transform="rotate(80 468.1 548.5)" fill="#242424"/><ellipse cx="376.3" cy="305.1" rx="3.3" ry="2.8" transform="rotate(22 376.3 305.1)" fill="#2e2e2e"/><ellipse cx="400.2" cy="475.6" rx="3.1" ry="3.1" transform="rotate(58 400.2 475.6)" fill="#1c1c1c"/><ellipse cx="300.0" cy="571.2" rx="2.8" ry="3.0" transform="rotate(168 300.0 571.2)" fill="#1c1c1c"/><ellipse cx="405.7" cy="420.9" rx="2.8" ry="2.6" transform="rotate(91 405.7 420.9)" fill="#242424"/><ellipse cx="526.6" cy="624.0" rx="4.1" ry="3.9" transform="rotate(7 526.6 624.0)" fill="#282828"/><ellipse cx="597.3" cy="551.1" rx="3.7" ry="3.5" transform="rotate(43 597.3 551.1)" fill="#282828"/><ellipse cx="368.1" cy="323.1" rx="2.9" ry="2.7" transform="rotate(122 368.1 323.1)" fill="#2e2e2e"/><ellipse cx="319.9" cy="461.2" rx="2.9" ry="2.9" transform="rotate(153 319.9 461.2)" fill="#242424"/><ellipse cx="472.7" cy="570.9" rx="3.2" ry="2.8" transform="rotate(90 472.7 570.9)" fill="#1c1c1c"/><ellipse cx="440.2" cy="672.4" rx="2.8" ry="2.8" transform="rotate(87 440.2 672.4)" fill="#1c1c1c"/><ellipse cx="568.4" cy="633.1" rx="3.0" ry="3.0" transform="rotate(24 568.4 633.1)" fill="#282828"/><ellipse cx="640.4" cy="513.8" rx="3.7" ry="4.0" transform="rotate(87 640.4 513.8)" fill="#202020"/><ellipse cx="450.7" cy="610.2" rx="3.1" ry="2.9" transform="rotate(100 450.7 610.2)" fill="#282828"/><ellipse cx="653.6" cy="559.6" rx="3.9" ry="3.5" transform="rotate(67 653.6 559.6)" fill="#282828"/><ellipse cx="435.5" cy="434.2" rx="3.9" ry="4.0" transform="rotate(93 435.5 434.2)" fill="#2e2e2e"/><ellipse cx="394.9" cy="410.0" rx="3.1" ry="2.8" transform="rotate(180 394.9 410.0)" fill="#1c1c1c"/><ellipse cx="634.3" cy="619.1" rx="3.1" ry="3.1" transform="rotate(154 634.3 619.1)" fill="#2e2e2e"/><ellipse cx="508.6" cy="388.6" rx="3.0" ry="3.0" transform="rotate(120 508.6 388.6)" fill="#202020"/><ellipse cx="556.8" cy="550.4" rx="3.0" ry="2.9" transform="rotate(50 556.8 550.4)" fill="#242424"/></g>
<rect x="200" y="280" width="560" height="440" filter="url(#mottle)"/>
<rect x="200" y="280" width="560" height="440" filter="url(#speck)"/>
<g filter="url(#rough)"><circle cx="373" cy="440" r="28.5" fill="none" stroke="#9a9a9a" stroke-width="1.6"/><ellipse cx="457" cy="384" rx="32" ry="27" transform="rotate(-20 457 384)" fill="#141414" fill-opacity="0.72"/></g><g filter="url(#rough)"><ellipse cx="287" cy="430" rx="7" ry="9.5" fill="#f0f0f0"/><ellipse cx="338" cy="446" rx="5" ry="3.5" fill="#f0f0f0"/><ellipse cx="348.5" cy="553.6" rx="5" ry="8" fill="#f0f0f0"/><ellipse cx="251" cy="566" rx="9" ry="6" fill="#f0f0f0"/><ellipse cx="302" cy="495" rx="4" ry="3" fill="#f0f0f0"/><ellipse cx="454" cy="423" rx="4" ry="3" fill="#f0f0f0"/><ellipse cx="538.6" cy="538" rx="7" ry="5" fill="#f0f0f0"/><ellipse cx="501" cy="552" rx="3" ry="3" fill="#f0f0f0"/><ellipse cx="651" cy="536" rx="5" ry="5" fill="#f0f0f0"/><ellipse cx="658.4" cy="576" rx="6" ry="7" fill="#f0f0f0"/><ellipse cx="618.5" cy="557" rx="4" ry="4" fill="#f0f0f0"/><ellipse cx="538.6" cy="608.6" rx="4" ry="4" fill="#f0f0f0"/><ellipse cx="477.6" cy="618" rx="4" ry="3" fill="#f0f0f0"/><ellipse cx="454" cy="651" rx="4" ry="4" fill="#f0f0f0"/><ellipse cx="374" cy="665" rx="3" ry="4" fill="#f0f0f0"/><ellipse cx="501" cy="674" rx="3" ry="5" fill="#f0f0f0"/><ellipse cx="534" cy="430" rx="3" ry="3" fill="#f0f0f0"/><ellipse cx="234" cy="560" rx="4" ry="4" fill="#f0f0f0"/><ellipse cx="355.5" cy="313" rx="7" ry="6" fill="#000"/><ellipse cx="273.4" cy="435" rx="7" ry="7" fill="#000"/><ellipse cx="623" cy="557" rx="4" ry="4" fill="#000"/><ellipse cx="689" cy="587.5" rx="7" ry="3" fill="#000"/><ellipse cx="618.5" cy="625" rx="5" ry="5" fill="#000"/><ellipse cx="548" cy="693" rx="5" ry="5" fill="#000"/><ellipse cx="649" cy="437" rx="3" ry="3" fill="#000"/></g>
</g>
<polyline points="203,495 239.4,495 239.4,421.7 276.3,421.7 276.3,312 313,312 313,239.5 350.6,239.5 350.6,275 423.7,275 423.7,312 496.1,312 496.1,348.5 569.2,348.5 569.2,385.4 677.1,385.4 677.1,422.2 749.5,422.2 749.5,459.4 820,459.4" fill="none" stroke="#d8d8d8" stroke-width="1.3"/>
<polyline points="820,497.3 786.3,497.3 786.3,533.5 750.2,533.5 750.2,570.4 713.6,570.4 713.6,606.3 677.6,606.3 677.6,642.4 640.6,642.4 640.6,715.2 603.3,715.2 603.3,750.7 567,750.7 567,787 531.6,787 531.6,821.7 494.3,821.7 494.3,787 457.7,787 457.7,750.7 386.7,750.7 386.7,715.2 348.6,715.2 348.6,679 275.8,679 275.8,642.4 203,642.4" fill="none" stroke="#d8d8d8" stroke-width="1.3"/>
<text x="316" y="237.3" font-family="Liberation Sans" font-size="11.5" letter-spacing="0.9" fill="#eeeeee" style="filter:drop-shadow(1px 1px 0.8px #666)">Montaged Map Data</text>
<path d="M207.5 849 V843.5 H336.5 V849" fill="none" stroke="#000" stroke-width="1.6"/>
<text x="252.5" y="857" font-family="Liberation Sans" font-size="12.5" fill="#000">2.5mm</text>
<g stroke="#00a1ff" fill="none">
<rect x="202.5" y="222" width="618.5" height="640" stroke-width="1.15"/>
<line x1="511.75" y1="159.5" x2="511.75" y2="222" stroke-width="1.15"/>
</g>
<g fill="#fff" stroke="#00a1ff" stroke-width="1.25">
<rect x="196.25" y="215.75" width="12.5" height="12.5"/>
<rect x="505.5" y="215.75" width="12.5" height="12.5"/>
<rect x="814.75" y="215.75" width="12.5" height="12.5"/>
<rect x="196.25" y="535.75" width="12.5" height="12.5"/>
<rect x="814.75" y="535.75" width="12.5" height="12.5"/>
<rect x="196.25" y="855.75" width="12.5" height="12.5"/>
<rect x="505.5" y="855.75" width="12.5" height="12.5"/>
<rect x="814.75" y="855.75" width="12.5" height="12.5"/>
<rect x="505.5" y="153.25" width="12.5" height="12.5"/>
</g>
</svg>
<div class="side">
<svg style="left:22px;top:89px" width="23.5" height="20.5" viewBox="0 0 576 512"><path d="M575.8 255.5c0 18-15 32.1-32 32.1h-32l.7 160.2c0 2.7-.2 5.4-.5 8.1V472c0 22.1-17.9 40-40 40H456c-1.1 0-2.2 0-3.3-.1c-1.4 .1-2.8 .1-4.2 .1H416 392c-22.1 0-40-17.9-40-40V448 384c0-17.7-14.3-32-32-32H256c-17.7 0-32 14.3-32 32v64 24c0 22.1-17.9 40-40 40H160 128.1c-1.5 0-3-.1-4.5-.2c-1.2 .1-2.4 .2-3.6 .2H104c-22.1 0-40-17.9-40-40V360c0-.9 0-1.9 .1-2.8V287.6H32c-18 0-32-14-32-32.1c0-9 3-17 10-24L266.4 8c7-7 15-8 22-8s15 2 21 7L564.8 231.5c8 7 12 15 11 24z"/></svg>
<svg style="left:27px;top:137px" width="13.5" height="18" viewBox="0 32 320 448"><path d="M0 55.2V426c0 12.2 9.9 22 22 22c6.3 0 12.4-2.7 16.6-7.5L121.2 346l58.1 116.3c7.9 15.8 27.1 22.2 42.9 14.3s22.2-27.1 14.3-42.9L179.8 320H297.9c12.2 0 22.1-9.9 22.1-22.1c0-6.3-2.7-12.3-7.4-16.5L38.6 37.9C34.3 34.1 28.9 32 23.2 32C10.4 32 0 42.4 0 55.2z"/></svg>
<svg style="left:23px;top:183px" width="20.5" height="20" viewBox="0 0 512 512"><path d="M278.6 9.4c-12.5-12.5-32.8-12.5-45.3 0l-64 64c-9.2 9.2-11.9 22.9-6.9 34.9s16.6 19.8 29.6 19.8h32v96H128V192c0-12.9-7.8-24.6-19.8-29.6s-25.7-2.2-34.9 6.9l-64 64c-12.5 12.5-12.5 32.8 0 45.3l64 64c9.2 9.2 22.9 11.9 34.9 6.9s19.8-16.6 19.8-29.6V288h96v96H192c-12.9 0-24.6 7.8-29.600 19.8s-2.2 25.7 6.9 34.9l64 64c12.5 12.5 32.8 12.5 45.3 0l64-64c9.2-9.2 11.9-22.9 6.9-34.9s-16.6-19.8-29.6-19.8H288V288h96v32c0 12.9 7.8 24.6 19.8 29.6s25.7 2.2 34.9-6.9l64-64c12.5-12.5 12.5-32.8 0-45.3l-64-64c-9.2-9.2-22.9-11.9-34.9-6.9s-19.8 16.6-19.8 29.6v32H288V128h32c12.9 0 24.6-7.8 29.6-19.8s2.2-25.7-6.9-34.9l-64-64z"/></svg>
<svg style="left:25px;top:231px" width="17.5" height="18" viewBox="0 32 448 448"><path d="M0 96C0 60.7 28.7 32 64 32H384c35.3 0 64 28.7 64 64V416c0 35.3-28.7 64-64 64H64c-35.3 0-64-28.7-64-64V96z"/></svg>
<svg style="left:22px;top:277px" width="23" height="20" viewBox="0 0 576 512"><path d="M32 119.4C12.9 108.3 0 87.7 0 64C0 28.7 28.7 0 64 0c23.7 0 44.3 12.9 55.4 32H456.6C467.7 12.9 488.3 0 512 0c35.3 0 64 28.7 64 64c0 23.7-12.9 44.3-32 55.4V392.6c19.1 11.1 32 31.7 32 55.4c0 35.3-28.7 64-64 64c-23.7 0-44.3-12.9-55.4-32H119.4c-11.1 19.1-31.7 32-55.4 32c-35.3 0-64-28.7-64-64c0-23.7 12.9-44.3 32-55.4V119.4zM456.6 96H119.4c-5.6 9.7-13.7 17.8-23.4 23.4V392.6c9.7 5.6 17.8 13.7 23.4 23.4H456.6c5.6-9.7 13.7-17.8 23.4-23.4V119.4c-9.7-5.600-17.8-13.7-23.4-23.4zM128 160c0-17.7 14.3-32 32-32H288c17.7 0 32 14.3 32 32v96c0 17.7-14.3 32-32 32H160c-17.7 0-32-14.3-32-32V160zM256 320h32c35.3 0 64-28.7 64-64V224h64c17.7 0 32 14.3 32 32v96c0 17.7-14.3 32-32 32H288c-17.7 0-32-14.3-32-32V320z"/></svg>
<svg style="left:21px;top:324px" width="25" height="20" viewBox="0 0 640 512"><path d="M32 119.4C12.9 108.3 0 87.7 0 64C0 28.7 28.7 0 64 0c23.7 0 44.3 12.9 55.4 32H328.6C339.7 12.9 360.3 0 384 0c35.3 0 64 28.7 64 64c0 23.7-12.9 44.3-32 55.4V232.6c19.1 11.1 32 31.7 32 55.4c0 35.3-28.7 64-64 64c-23.7 0-44.3-12.9-55.4-32H119.4c-11.1 19.1-31.7 32-55.4 32c-35.3 0-64-28.7-64-64c0-23.7 12.9-44.3 32-55.4V119.4zM119.4 96c-5.6 9.7-13.7 17.8-23.4 23.4V232.6c9.7 5.6 17.8 13.7 23.4 23.4H328.6c5.6-9.7 13.7-17.8 23.4-23.4V119.4c-9.7-5.6-17.8-13.7-23.4-23.4H119.4zm192 384c-11.1 19.1-31.7 32-55.4 32c-35.3 0-64-28.7-64-64c0-23.7 12.9-44.3 32-55.4V352h64v40.6c9.7 5.6 17.8 13.7 23.4 23.4H520.6c5.6-9.7 13.7-17.8 23.4-23.4V279.4c-9.7-5.6-17.8-13.7-23.4-23.4h-46c-5.4-15.4-14.6-28.9-26.5-39.6V192h72.6c11.1-19.1 31.7-32 55.4-32c35.3 0 64 28.7 64 64c0 23.7-12.9 44.3-32 55.4V392.6c19.1 11.1 32 31.7 32 55.4c0 35.3-28.7 64-64 64c-23.7 0-44.3-12.9-55.4-32H311.4z"/></svg>
<svg style="left:23.5px;top:371px" width="20" height="20" viewBox="0 0 512 512"><path d="M177.9 494.1c-18.7 18.7-49.1 18.7-67.9 0L17.9 401.9c-18.7-18.7-18.7-49.1 0-67.9l50.7-50.7 48 48c6.2 6.2 16.4 6.2 22.6 0s6.2-16.4 0-22.6l-48-48 41.4-41.4 48 48c6.2 6.2 16.4 6.2 22.6 0s6.2-16.4 0-22.6l-48-48 41.4-41.4 48 48c6.2 6.2 16.4 6.2 22.6 0s6.2-16.4 0-22.6l-48-48 41.4-41.4 48 48c6.2 6.2 16.4 6.2 22.6 0s6.2-16.4 0-22.6l-48-48 50.7-50.7c18.7-18.7 49.1-18.7 67.9 0l92.1 92.1c18.7 18.7 18.7 49.1 0 67.9L177.9 494.1z"/></svg>
<svg style="left:23.5px;top:418px" width="20" height="19" viewBox="0 0 512 512"><path d="M128 32c0-17.7-14.3-32-32-32S64 14.3 64 32V64H32C14.3 64 0 78.3 0 96s14.3 32 32 32H64V384c0 35.3 28.7 64 64 64H352V384H128V32zM384 480c0 17.7 14.3 32 32 32s32-14.3 32-32V448h32c17.7 0 32-14.3 32-32s-14.3-32-32-32H448l0-256c0-35.3-28.7-64-64-64L160 64v64l224 0 0 352z"/></svg>
</div>

<div class="tab" style="left:67px;width:158px;"></div>
<div class="tab" style="left:225px;width:157px;"></div>
<div class="tab" style="left:382px;width:142px;"></div>
<div class="abs" style="left:382px;top:82px;width:1px;height:44px;background:#dee2e6;"></div>
<div class="t" style="left:88px;top:92px;font-size:20px;color:#0d6efd;letter-spacing:-0.25px;">Workspace 1</div>
<div class="t" style="left:246px;top:92px;font-size:20px;color:#0d6efd;letter-spacing:-0.25px;">Workspace 2</div>
<div class="t" style="left:403px;top:92px;font-size:20px;color:#495057;">Workspace</div>

<div class="abs" style="left:1233px;top:75px;width:242px;height:133px;background:#fff;border-radius:7px;"></div>
<div class="abs" style="left:1233px;top:141px;width:242px;height:1px;background:#dee2e6;"></div>
<div class="t" style="left:1257px;top:98.6px;font-size:20px;color:#212529;letter-spacing:-0.3px;">Layers</div>
<div class="t" style="left:1258px;top:165px;font-size:20px;color:#212529;letter-spacing:0.22px;">Accordion Item #2</div>


<svg class="abs" style="left:545px;top:97px" width="11" height="12" viewBox="0 0 11 12"><path d="M1 6 H10.2 M5.7 1 V11" stroke="#fff" stroke-width="1.85"/></svg>
<svg class="abs" style="left:1426px;top:102px" width="21" height="13" viewBox="0 0 21 13"><path d="M1 1.5 L10.5 11 L20 1.5" fill="none" stroke="#212529" stroke-width="1.65"/></svg>
<svg class="abs" style="left:1426px;top:168px" width="21" height="13" viewBox="0 0 21 13"><path d="M1 1.5 L10.5 11 L20 1.5" fill="none" stroke="#212529" stroke-width="1.65"/></svg>
<div id="footer"><div class="t" style="left:0px;top:5.8px;font-size:20px;letter-spacing:0.7px;">Footer text</div></div>
</body></html>
